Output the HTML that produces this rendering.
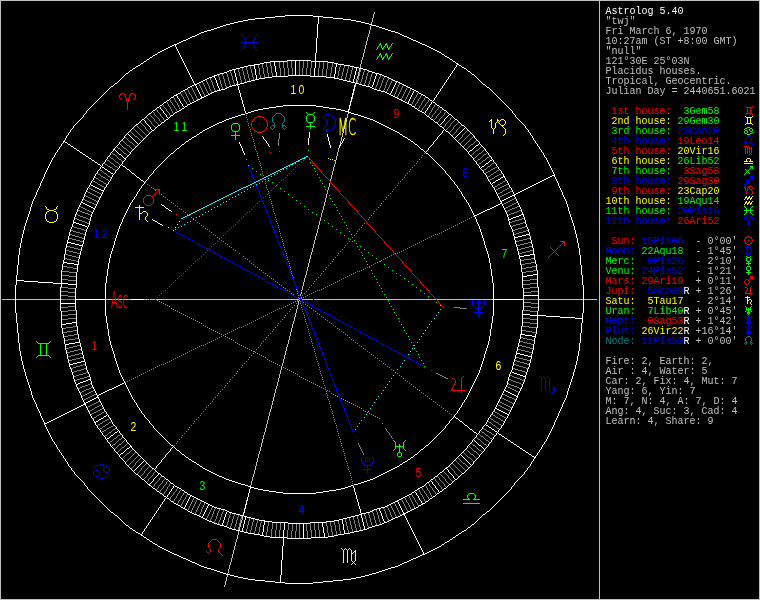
<!DOCTYPE html>
<html lang="en"><head><meta charset="utf-8"><title>Astrolog 5.40</title>
<style>
html,body{margin:0;padding:0;background:#000;}
body{width:760px;height:600px;overflow:hidden;position:relative;}
svg{position:absolute;left:0;top:0;display:block;}
svg text{stroke:none;}

</style></head><body>
<svg width="760" height="600" viewBox="0 0 760 600" shape-rendering="crispEdges" fill="none" stroke-width="1">
<g id="frame">
<path stroke="#c0c0c0" d="M0 0.5 h760M0 599.5 h760M0.5 1 v598M759.5 1 v598"/>
<path stroke="#c0c0c0" d="M599.5 0 v600"/>
</g>
<g id="axes">
<path stroke="#c0c0c0" d="M2 299.5 h595"/>
<path stroke="#c0c0c0" d="M224.5 585 v2M225.5 581 v4M226.5 577 v4M227.5 573 v4M228.5 569 v4M229.5 565 v4M230.5 562 v3M231.5 558 v4M232.5 554 v4M233.5 550 v4M234.5 546 v4M235.5 542 v4M236.5 539 v3M237.5 535 v4M238.5 531 v4M239.5 527 v4M240.5 523 v4M241.5 520 v3M242.5 516 v4M243.5 512 v4M244.5 508 v4M245.5 504 v4M246.5 500 v4M247.5 497 v3M248.5 493 v4M249.5 489 v4M250.5 485 v4M251.5 481 v4M252.5 477 v4M253.5 474 v3M254.5 470 v4M255.5 466 v4M256.5 462 v4M257.5 458 v4M258.5 454 v4M259.5 451 v3M260.5 447 v4M261.5 443 v4M262.5 439 v4M263.5 435 v4M264.5 432 v3M265.5 428 v4M266.5 424 v4M267.5 420 v4M268.5 416 v4M269.5 412 v4M270.5 409 v3M271.5 405 v4M272.5 401 v4M273.5 397 v4M274.5 393 v4M275.5 389 v4M276.5 386 v3M277.5 382 v4M278.5 378 v4M279.5 374 v4M280.5 370 v4M281.5 366 v4M282.5 363 v3M283.5 359 v4M284.5 355 v4M285.5 351 v4M286.5 347 v4M287.5 344 v3M288.5 340 v4M289.5 336 v4M290.5 332 v4M291.5 328 v4M292.5 324 v4M293.5 321 v3M294.5 317 v4M295.5 313 v4M296.5 309 v4M297.5 305 v4M298.5 301 v4M299.5 298 v3M300.5 294 v4M301.5 290 v4M302.5 286 v4M303.5 282 v4M304.5 278 v4M305.5 275 v3M306.5 271 v4M307.5 267 v4M308.5 263 v4M309.5 259 v4M310.5 255 v4M311.5 252 v3M312.5 248 v4M313.5 244 v4M314.5 240 v4M315.5 236 v4M316.5 233 v3M317.5 229 v4M318.5 225 v4M319.5 221 v4M320.5 217 v4M321.5 213 v4M322.5 210 v3M323.5 206 v4M324.5 202 v4M325.5 198 v4M326.5 194 v4M327.5 190 v4M328.5 187 v3M329.5 183 v4M330.5 179 v4M331.5 175 v4M332.5 171 v4M333.5 167 v4M334.5 164 v3M335.5 160 v4M336.5 156 v4M337.5 152 v4M338.5 148 v4M339.5 145 v3M340.5 141 v4M341.5 137 v4M342.5 133 v4M343.5 129 v4M344.5 125 v4M345.5 122 v3M346.5 118 v4M347.5 114 v4M348.5 110 v4M349.5 106 v4M350.5 102 v4M351.5 99 v3M352.5 95 v4M353.5 91 v4M354.5 87 v4M355.5 83 v4M356.5 79 v4M357.5 76 v3M358.5 72 v4M359.5 68 v4M360.5 64 v4M361.5 60 v4M362.5 57 v3M363.5 53 v4M364.5 49 v4M365.5 45 v4M366.5 41 v4M367.5 37 v4M368.5 34 v3M369.5 30 v4M370.5 26 v4M371.5 22 v4M372.5 18 v4M373.5 14 v4M374.5 12 v2"/>
</g>
<g id="degree-ticks">
<path stroke="#808080" d="M135 136.5 h2M130 142.5 h2M471 144.5 h2M127 145.5 h2M118 148.5 h2M124 148.5 h2M476 150.5 h2M124 153.5 h2M479 153.5 h2M113 154.5 h2M484 154.5 h2M487 157.5 h2M111 158.5 h2M119 159.5 h2M478 159.5 h2M107 160.5 h2M483 160.5 h2M116 162.5 h2M111 163.5 h2M479 163.5 h2M492 163.5 h2M105 164.5 h2M108 166.5 h2M115 166.5 h2M488 166.5 h2M110 167.5 h2M495 167.5 h2M493 168.5 h2M113 169.5 h2M484 169.5 h2M491 169.5 h2M100 170.5 h2M497 170.5 h2M488 171.5 h2M486 172.5 h2M494 172.5 h2M104 173.5 h2M98 174.5 h2M491 174.5 h2M499 174.5 h2M497 175.5 h2M101 176.5 h2M108 176.5 h2M488 176.5 h2M495 176.5 h2M103 177.5 h2M96 178.5 h2M492 178.5 h2M106 179.5 h2M490 179.5 h2M99 180.5 h2M93 181.5 h2M101 181.5 h2M503 181.5 h2M95 182.5 h2M104 183.5 h2M500 183.5 h2M98 184.5 h2M498 184.5 h2M506 184.5 h2M100 185.5 h2M504 185.5 h2M102 186.5 h2M495 186.5 h2M502 186.5 h2M500 187.5 h2M89 188.5 h2M498 188.5 h2M507 188.5 h2M91 189.5 h2M496 189.5 h2M505 189.5 h2M93 190.5 h2M503 190.5 h2M95 191.5 h2M510 191.5 h2M88 192.5 h2M97 192.5 h2M500 192.5 h2M508 192.5 h2M90 193.5 h2M99 193.5 h2M498 193.5 h2M506 193.5 h2M92 194.5 h2M504 194.5 h2M94 195.5 h2M502 195.5 h2M86 196.5 h2M96 196.5 h2M500 196.5 h2M88 197.5 h2M98 197.5 h2M90 198.5 h2M514 198.5 h2M83 199.5 h2M92 199.5 h2M512 199.5 h2M85 200.5 h2M94 200.5 h2M510 200.5 h2M87 201.5 h2M96 201.5 h2M508 201.5 h2M89 202.5 h3M506 202.5 h2M516 202.5 h2M92 203.5 h2M504 203.5 h2M514 203.5 h2M94 204.5 h2M512 204.5 h2M510 205.5 h2M79 206.5 h2M508 206.5 h2M517 206.5 h2M81 207.5 h2M506 207.5 h2M515 207.5 h2M83 208.5 h2M504 208.5 h2M512 208.5 h3M85 209.5 h2M510 209.5 h2M78 210.5 h2M87 210.5 h2M508 210.5 h2M519 210.5 h2M80 211.5 h2M89 211.5 h2M506 211.5 h2M517 211.5 h2M82 212.5 h3M91 212.5 h2M514 212.5 h3M85 213.5 h3M511 213.5 h3M76 214.5 h2M88 214.5 h2M509 214.5 h2M78 215.5 h2M90 215.5 h2M507 215.5 h2M80 216.5 h3M83 217.5 h3M75 218.5 h2M86 218.5 h2M522 218.5 h2M77 219.5 h2M88 219.5 h2M519 219.5 h3M79 220.5 h3M515 220.5 h4M82 221.5 h3M512 221.5 h3M85 222.5 h2M510 222.5 h2M523 222.5 h2M87 223.5 h2M520 223.5 h3M516 224.5 h4M513 225.5 h3M72 226.5 h2M511 226.5 h2M525 226.5 h2M74 227.5 h3M522 227.5 h3M77 228.5 h4M518 228.5 h4M81 229.5 h3M515 229.5 h3M71 230.5 h2M84 230.5 h2M513 230.5 h2M526 230.5 h2M73 231.5 h3M523 231.5 h3M76 232.5 h4M519 232.5 h4M80 233.5 h3M516 233.5 h3M70 234.5 h2M83 234.5 h2M514 234.5 h2M72 235.5 h3M75 236.5 h4M79 237.5 h3M69 238.5 h3M82 238.5 h2M527 238.5 h3M72 239.5 h4M523 239.5 h4M76 240.5 h4M519 240.5 h4M80 241.5 h3M516 241.5 h3M528 242.5 h3M524 243.5 h4M520 244.5 h4M517 245.5 h3M67 246.5 h3M529 246.5 h3M70 247.5 h4M525 247.5 h4M74 248.5 h4M521 248.5 h4M78 249.5 h3M518 249.5 h3M66 250.5 h3M530 250.5 h3M69 251.5 h4M526 251.5 h4M73 252.5 h4M522 252.5 h4M77 253.5 h3M519 253.5 h3M65 254.5 h3M68 255.5 h4M72 256.5 h4M76 257.5 h3M64 258.5 h3M531 258.5 h4M67 259.5 h4M524 259.5 h7M71 260.5 h5M520 260.5 h4M76 261.5 h3M531 262.5 h4M525 263.5 h6M521 264.5 h4M63 266.5 h4M532 266.5 h4M67 267.5 h6M526 267.5 h6M73 268.5 h4M522 268.5 h4M533 270.5 h4M62 271.5 h7M526 271.5 h7M69 272.5 h8M522 272.5 h4M62 275.5 h7M69 276.5 h7M61 279.5 h7M530 279.5 h8M68 280.5 h8M523 280.5 h7M530 283.5 h8M523 284.5 h7M61 287.5 h7M530 287.5 h8M68 288.5 h8M523 288.5 h7M61 291.5 h7M531 291.5 h7M68 292.5 h7M524 292.5 h7M61 295.5 h7M68 296.5 h7M61 299.5 h14M524 299.5 h14M524 302.5 h7M531 303.5 h7M68 306.5 h7M524 306.5 h7M61 307.5 h7M531 307.5 h7M68 310.5 h8M523 310.5 h7M61 311.5 h7M530 311.5 h8M68 314.5 h8M61 315.5 h7M68 318.5 h8M523 318.5 h7M61 319.5 h7M530 319.5 h8M523 322.5 h7M530 323.5 h7M73 326.5 h4M522 326.5 h7M66 327.5 h7M529 327.5 h8M62 328.5 h4M73 330.5 h4M522 330.5 h4M67 331.5 h6M526 331.5 h6M63 332.5 h4M532 332.5 h4M74 334.5 h4M68 335.5 h6M64 336.5 h4M520 337.5 h3M75 338.5 h4M523 338.5 h4M68 339.5 h7M527 339.5 h5M64 340.5 h4M532 340.5 h3M520 341.5 h3M523 342.5 h4M527 343.5 h4M531 344.5 h3M77 345.5 h3M519 345.5 h3M73 346.5 h4M522 346.5 h4M69 347.5 h4M526 347.5 h4M66 348.5 h3M530 348.5 h3M78 349.5 h3M518 349.5 h3M74 350.5 h4M521 350.5 h4M70 351.5 h4M525 351.5 h4M67 352.5 h3M529 352.5 h3M79 353.5 h3M75 354.5 h4M71 355.5 h4M68 356.5 h3M80 357.5 h3M516 357.5 h3M76 358.5 h4M519 358.5 h4M72 359.5 h4M523 359.5 h4M69 360.5 h3M515 360.5 h2M527 360.5 h3M517 361.5 h3M520 362.5 h4M524 363.5 h3M83 364.5 h2M514 364.5 h2M527 364.5 h2M80 365.5 h3M516 365.5 h3M76 366.5 h4M519 366.5 h4M73 367.5 h3M523 367.5 h3M71 368.5 h2M84 368.5 h2M513 368.5 h2M526 368.5 h2M81 369.5 h3M515 369.5 h3M77 370.5 h4M518 370.5 h4M74 371.5 h3M522 371.5 h3M72 372.5 h2M86 372.5 h2M525 372.5 h2M83 373.5 h3M79 374.5 h4M76 375.5 h3M510 375.5 h2M74 376.5 h2M87 376.5 h2M512 376.5 h2M84 377.5 h3M514 377.5 h3M80 378.5 h4M517 378.5 h3M77 379.5 h3M509 379.5 h2M520 379.5 h2M75 380.5 h2M511 380.5 h2M522 380.5 h2M513 381.5 h3M516 382.5 h3M90 383.5 h2M507 383.5 h2M519 383.5 h2M88 384.5 h2M509 384.5 h2M521 384.5 h2M85 385.5 h3M511 385.5 h3M82 386.5 h3M506 386.5 h2M514 386.5 h3M80 387.5 h2M91 387.5 h2M508 387.5 h2M517 387.5 h2M78 388.5 h2M89 388.5 h2M510 388.5 h2M519 388.5 h2M86 389.5 h3M512 389.5 h2M84 390.5 h2M93 390.5 h2M514 390.5 h2M82 391.5 h2M91 391.5 h2M516 391.5 h2M80 392.5 h2M89 392.5 h2M518 392.5 h2M87 393.5 h2M85 394.5 h2M94 394.5 h2M503 394.5 h2M83 395.5 h2M92 395.5 h2M505 395.5 h2M81 396.5 h2M90 396.5 h2M507 396.5 h2M88 397.5 h2M509 397.5 h3M86 398.5 h2M502 398.5 h2M512 398.5 h2M84 399.5 h2M504 399.5 h2M514 399.5 h2M506 400.5 h2M98 401.5 h2M508 401.5 h2M96 402.5 h2M500 402.5 h2M510 402.5 h2M94 403.5 h2M502 403.5 h2M512 403.5 h2M92 404.5 h2M504 404.5 h2M90 405.5 h2M99 405.5 h2M498 405.5 h2M506 405.5 h2M88 406.5 h2M97 406.5 h2M500 406.5 h2M508 406.5 h2M95 407.5 h2M502 407.5 h2M510 407.5 h2M102 408.5 h2M504 408.5 h2M92 409.5 h2M100 409.5 h2M506 409.5 h2M90 410.5 h2M98 410.5 h2M508 410.5 h2M96 411.5 h2M94 412.5 h2M102 412.5 h2M495 412.5 h2M92 413.5 h2M497 413.5 h2M99 414.5 h2M97 415.5 h2M493 415.5 h2M500 415.5 h2M502 416.5 h2M94 417.5 h2M496 417.5 h2M504 417.5 h2M498 418.5 h2M107 419.5 h2M491 419.5 h2M105 420.5 h2M501 420.5 h2M103 421.5 h2M494 421.5 h2M109 422.5 h2M489 422.5 h2M496 422.5 h2M100 423.5 h2M98 424.5 h2M106 424.5 h2M499 424.5 h2M493 425.5 h2M103 426.5 h2M111 426.5 h2M109 427.5 h2M100 428.5 h2M107 428.5 h2M497 428.5 h2M113 429.5 h2M484 429.5 h2M104 430.5 h2M102 431.5 h2M487 431.5 h2M109 432.5 h2M482 432.5 h2M489 432.5 h2M492 434.5 h2M105 435.5 h2M118 435.5 h2M486 435.5 h2M481 436.5 h2M114 438.5 h2M490 438.5 h2M119 439.5 h2M478 439.5 h2M486 440.5 h2M110 441.5 h2M113 444.5 h2M119 444.5 h2M484 444.5 h2M473 445.5 h2M122 447.5 h2M479 450.5 h2M474 451.5 h2M127 453.5 h2M471 454.5 h2M468 457.5 h2M463 463.5 h2M83 400.5 h1M85 195.5 h1M87 191.5 h1M87 407.5 h1M88 187.5 h1M89 411.5 h1M91 414.5 h1M92 180.5 h1M93 418.5 h1M94 408.5 h1M95 177.5 h1M96 416.5 h1M97 173.5 h1M97 183.5 h1M97 425.5 h1M98 179.5 h1M99 169.5 h1M99 429.5 h1M100 175.5 h1M101 194.5 h1M101 404.5 h1M101 413.5 h1M101 432.5 h1M102 171.5 h1M102 422.5 h1M102 427.5 h1M103 172.5 h1M103 182.5 h1M104 163.5 h1M104 187.5 h1M104 411.5 h1M104 436.5 h1M105 178.5 h1M105 425.5 h1M106 159.5 h1M106 174.5 h1M106 184.5 h1M106 429.5 h1M107 165.5 h1M107 175.5 h1M107 434.5 h1M108 180.5 h1M108 423.5 h1M108 433.5 h1M109 156.5 h1M109 161.5 h1M109 418.5 h1M109 442.5 h1M110 157.5 h1M110 162.5 h1M110 177.5 h1M111 152.5 h1M111 421.5 h1M111 431.5 h1M111 446.5 h1M112 153.5 h1M112 168.5 h1M112 430.5 h1M112 440.5 h1M112 445.5 h1M113 159.5 h1M113 164.5 h1M113 425.5 h1M113 439.5 h1M114 160.5 h1M114 165.5 h1M114 449.5 h1M115 155.5 h1M115 161.5 h1M115 170.5 h1M115 428.5 h1M115 443.5 h1M115 448.5 h1M116 146.5 h1M116 156.5 h1M116 437.5 h1M116 442.5 h1M116 447.5 h1M117 147.5 h1M117 157.5 h1M117 167.5 h1M117 436.5 h1M117 441.5 h1M117 446.5 h1M117 452.5 h1M118 158.5 h1M118 163.5 h1M118 440.5 h1M118 445.5 h1M118 451.5 h1M119 143.5 h1M119 164.5 h1M119 450.5 h1M120 144.5 h1M120 149.5 h1M120 434.5 h1M120 449.5 h1M121 145.5 h1M121 150.5 h1M121 160.5 h1M121 438.5 h1M121 443.5 h1M121 448.5 h1M122 140.5 h1M122 146.5 h1M122 151.5 h1M122 161.5 h1M122 437.5 h1M122 442.5 h1M122 458.5 h1M123 141.5 h1M123 147.5 h1M123 152.5 h1M123 441.5 h1M123 457.5 h1M124 142.5 h1M124 440.5 h1M124 446.5 h1M124 456.5 h1M125 137.5 h1M125 143.5 h1M125 445.5 h1M125 455.5 h1M125 462.5 h1M126 138.5 h1M126 144.5 h1M126 149.5 h1M126 154.5 h1M126 444.5 h1M126 454.5 h1M126 461.5 h1M127 139.5 h1M127 150.5 h1M127 155.5 h1M127 443.5 h1M127 460.5 h1M128 140.5 h1M128 151.5 h1M128 459.5 h1M128 465.5 h1M129 141.5 h1M129 146.5 h1M129 152.5 h1M129 452.5 h1M129 458.5 h1M129 464.5 h1M130 131.5 h1M130 147.5 h1M130 451.5 h1M130 457.5 h1M130 463.5 h1M131 132.5 h1M131 148.5 h1M131 450.5 h1M131 456.5 h1M131 462.5 h1M131 468.5 h1M132 133.5 h1M132 143.5 h1M132 149.5 h1M132 449.5 h1M132 455.5 h1M132 461.5 h1M132 467.5 h1M133 128.5 h1M133 134.5 h1M133 144.5 h1M133 454.5 h1M133 460.5 h1M133 466.5 h1M134 129.5 h1M134 135.5 h1M134 145.5 h1M134 453.5 h1M134 459.5 h1M134 465.5 h1M135 130.5 h1M135 146.5 h1M135 452.5 h1M135 458.5 h1M135.5 463 v2M136 125.5 h1M136 131.5 h1M136 457.5 h1M136 462.5 h1M137 126.5 h1M137 132.5 h1M137 137.5 h1M137 456.5 h1M137 461.5 h1M137 473.5 h1M138 127.5 h1M138 133.5 h1M138 138.5 h1M138 455.5 h1M138 460.5 h1M138 472.5 h1M139 128.5 h1M139 134.5 h1M139 139.5 h1M139 459.5 h1M139 471.5 h1M140 122.5 h1M140 129.5 h1M140 135.5 h1M140 140.5 h1M140 458.5 h1M140 470.5 h1M140 476.5 h1M141 123.5 h1M141 130.5 h1M141 136.5 h1M141.5 468 v2M141 475.5 h1M142 124.5 h1M142 131.5 h1M142 137.5 h1M142 467.5 h1M142 474.5 h1M143 125.5 h1M143 132.5 h1M143 138.5 h1M143 466.5 h1M143 473.5 h1M143 479.5 h1M144 126.5 h1M144 133.5 h1M144 465.5 h1M144.5 471 v2M144 478.5 h1M145.5 127 v2M145 134.5 h1M145 464.5 h1M145 470.5 h1M145 477.5 h1M146 117.5 h1M146 129.5 h1M146 135.5 h1M146 463.5 h1M146 469.5 h1M146 476.5 h1M146 482.5 h1M147 118.5 h1M147 130.5 h1M147 468.5 h1M147.5 474 v2M147 481.5 h1M148 119.5 h1M148 131.5 h1M148 467.5 h1M148 473.5 h1M148.5 479 v2M149 114.5 h1M149 120.5 h1M149 132.5 h1M149 466.5 h1M149 472.5 h1M149 478.5 h1M150 115.5 h1M150 121.5 h1M150 471.5 h1M150 477.5 h1M151 116.5 h1M151.5 122 v2M151 470.5 h1M151 476.5 h1M152 111.5 h1M152 117.5 h1M152 124.5 h1M152 469.5 h1M152 475.5 h1M152 487.5 h1M153 112.5 h1M153 118.5 h1M153 125.5 h1M153.5 473 v2M153 486.5 h1M154.5 113 v2M154.5 119 v2M154 126.5 h1M154 472.5 h1M154.5 484 v2M155 115.5 h1M155 121.5 h1M155 127.5 h1M155 471.5 h1M155 483.5 h1M156 109.5 h1M156 116.5 h1M156 122.5 h1M156 482.5 h1M156 489.5 h1M157.5 110 v2M157 117.5 h1M157 123.5 h1M157 481.5 h1M157 488.5 h1M158 112.5 h1M158 118.5 h1M158 124.5 h1M158 480.5 h1M158.5 486 v2M159 113.5 h1M159.5 119 v2M159.5 478 v2M159 485.5 h1M159 492.5 h1M160.5 114 v2M160 121.5 h1M160 477.5 h1M160 484.5 h1M160.5 490 v2M161 116.5 h1M161 122.5 h1M161 476.5 h1M161 483.5 h1M161 489.5 h1M162 104.5 h1M162 117.5 h1M162.5 481 v2M162 488.5 h1M163.5 105 v2M163.5 118 v2M163 480.5 h1M163.5 486 v2M163 494.5 h1M164 107.5 h1M164 120.5 h1M164 479.5 h1M164 485.5 h1M164.5 492 v2M165 108.5 h1M165 484.5 h1M165 491.5 h1M166 101.5 h1M166.5 109 v2M166.5 482 v2M166.5 489 v2M167.5 102 v2M167 111.5 h1M167 481.5 h1M167.5 487 v2M168.5 104 v2M168 112.5 h1M168 486.5 h1M169 99.5 h1M169 106.5 h1M169.5 113 v2M169.5 484 v2M169 499.5 h1M170.5 100 v2M170.5 107 v2M170 115.5 h1M170 483.5 h1M170.5 497 v2M171 102.5 h1M171.5 109 v2M171 496.5 h1M172.5 103 v2M172.5 111 v2M172 495.5 h1M173 97.5 h1M173 105.5 h1M173 113.5 h1M173.5 493 v2M173 501.5 h1M174.5 98 v2M174.5 106 v2M174 492.5 h1M174.5 499 v2M175.5 100 v2M175 108.5 h1M175 491.5 h1M175 498.5 h1M176 102.5 h1M176.5 109 v2M176.5 489 v2M176.5 496 v2M177.5 103 v2M177 111.5 h1M177 488.5 h1M177.5 494 v2M177 503.5 h1M178.5 105 v2M178 493.5 h1M178.5 501 v2M179.5 107 v2M179.5 491 v2M179 500.5 h1M180 93.5 h1M180 109.5 h1M180 490.5 h1M180.5 498 v2M180 506.5 h1M181.5 94 v2M181.5 496 v2M181.5 504 v2M182 96.5 h1M182 495.5 h1M182.5 502 v2M183.5 97 v2M183.5 493 v2M183.5 500 v2M184 91.5 h1M184.5 99 v2M184 492.5 h1M184 499.5 h1M185.5 92 v2M185 101.5 h1M185.5 497 v2M186.5 94 v2M186.5 102 v2M186.5 495 v2M187 89.5 h1M187.5 96 v2M187 104.5 h1M187 494.5 h1M187 510.5 h1M188.5 90 v2M188.5 98 v2M188.5 508 v2M189.5 92 v2M189.5 100 v2M189.5 506 v2M190 94.5 h1M190.5 102 v2M190.5 504 v2M191 87.5 h1M191.5 95 v2M191.5 502 v2M191.5 510 v2M192.5 88 v2M192.5 97 v2M192.5 500 v2M192.5 508 v2M193.5 90 v2M193.5 99 v2M193.5 498 v2M193.5 506 v2M194.5 92 v2M194 101.5 h1M194 497.5 h1M194.5 504 v2M195.5 94 v2M195.5 502 v2M195.5 512 v2M196.5 96 v2M196.5 500 v2M196.5 510 v2M197.5 98 v2M197 499.5 h1M197.5 508 v2M198 83.5 h1M198.5 506 v2M199.5 84 v2M199.5 504 v2M199.5 514 v2M200.5 86 v2M200.5 502 v2M200.5 512 v2M201.5 88 v2M201 501.5 h1M201.5 509 v3M202.5 81 v2M202.5 90 v2M202.5 507 v2M203.5 83 v2M203.5 92 v2M203.5 505 v2M204.5 85 v2M204.5 94 v2M204.5 503 v2M205.5 87 v2M206.5 80 v2M206.5 89 v2M206.5 518 v2M207.5 82 v2M207.5 91 v2M207.5 516 v2M208.5 84 v2M208.5 93 v2M208.5 514 v2M209.5 86 v3M209.5 512 v2M210.5 78 v2M210.5 89 v2M210.5 510 v2M210.5 519 v2M211.5 80 v2M211.5 91 v2M211.5 508 v2M211.5 517 v2M212.5 82 v3M212.5 506 v2M212.5 514 v3M213.5 85 v3M213.5 511 v3M214.5 88 v2M214.5 509 v2M214.5 521 v2M215.5 90 v2M215.5 507 v2M215.5 519 v2M216.5 516 v3M217.5 513 v3M218.5 75 v2M218.5 511 v2M218.5 522 v2M219.5 77 v3M219.5 509 v2M219.5 520 v2M220.5 80 v4M220.5 517 v3M221.5 84 v3M221.5 514 v3M222.5 74 v2M222.5 87 v2M222.5 512 v2M223.5 76 v3M223.5 510 v2M224.5 79 v4M225.5 83 v3M226.5 72 v2M226.5 86 v2M226.5 525 v2M227.5 74 v3M227.5 522 v3M228.5 77 v4M228.5 518 v4M229.5 81 v3M229.5 515 v3M230.5 71 v2M230.5 84 v2M230.5 513 v2M230.5 526 v2M231.5 73 v3M231.5 523 v3M232.5 76 v4M232.5 519 v4M233.5 80 v3M233.5 516 v3M234.5 83 v2M234.5 514 v2M234.5 527 v2M235.5 524 v3M236.5 520 v4M237.5 517 v3M238.5 69 v3M238.5 515 v2M238.5 527 v3M239.5 72 v4M239.5 523 v4M240.5 76 v4M240.5 519 v4M241.5 80 v3M241.5 516 v3M242.5 68 v3M243.5 71 v4M244.5 75 v4M245.5 79 v3M246.5 67 v3M246.5 529 v3M247.5 70 v4M247.5 525 v4M248.5 74 v4M248.5 521 v4M249.5 78 v3M249.5 518 v3M250.5 66 v3M250.5 530 v3M251.5 69 v4M251.5 526 v4M252.5 73 v4M252.5 522 v4M253.5 77 v3M253.5 519 v3M254.5 531 v3M255.5 527 v4M256.5 523 v4M257.5 520 v3M258.5 64 v4M258.5 532 v3M259.5 68 v7M259.5 527 v5M260.5 75 v4M260.5 523 v4M261.5 520 v3M262.5 64 v4M263.5 68 v6M264.5 74 v4M266.5 63 v4M266.5 532 v4M267.5 67 v6M267.5 526 v6M268.5 73 v4M268.5 522 v4M270.5 62 v4M271.5 66 v7M271.5 529 v8M272.5 73 v4M272.5 522 v7M275.5 530 v7M276.5 523 v7M279.5 61 v7M279.5 530 v8M280.5 68 v8M280.5 523 v7M283.5 61 v7M284.5 68 v8M287.5 61 v7M287.5 530 v8M288.5 68 v8M288.5 523 v7M291.5 61 v7M291.5 531 v7M292.5 68 v7M292.5 524 v7M295.5 531 v7M296.5 524 v7M299.5 61 v14M299.5 524 v14M302.5 68 v7M303.5 61 v7M306.5 68 v7M306.5 524 v7M307.5 61 v7M307.5 531 v7M310.5 68 v8M310.5 523 v7M311.5 61 v7M311.5 530 v8M314.5 523 v7M315.5 530 v8M318.5 68 v8M318.5 523 v7M319.5 61 v7M319.5 530 v8M322.5 69 v7M323.5 62 v7M326.5 69 v8M326.5 522 v4M327.5 62 v7M327.5 526 v7M328.5 533 v4M330.5 73 v4M330.5 522 v4M331.5 67 v6M331.5 526 v6M332.5 63 v4M332.5 532 v4M334.5 521 v4M335.5 525 v6M336.5 531 v4M337.5 76 v3M338.5 71 v5M338.5 520 v4M339.5 67 v4M339.5 524 v7M340.5 64 v3M340.5 531 v4M341.5 76 v3M342.5 72 v4M343.5 68 v4M344.5 65 v3M345.5 77 v3M345.5 519 v3M346.5 73 v4M346.5 522 v4M347.5 69 v4M347.5 526 v4M348.5 66 v3M348.5 530 v3M349.5 78 v3M349.5 518 v3M350.5 74 v4M350.5 521 v4M351.5 70 v4M351.5 525 v4M352.5 67 v3M352.5 529 v3M353.5 517 v3M354.5 520 v4M355.5 524 v4M356.5 528 v3M357.5 80 v3M357.5 516 v3M358.5 76 v4M358.5 519 v4M359.5 72 v4M359.5 523 v4M360.5 69 v3M360.5 82 v2M360.5 527 v3M361.5 79 v3M362.5 75 v4M363.5 72 v3M364.5 70 v2M364.5 83 v2M364.5 514 v2M365.5 80 v3M365.5 516 v3M366.5 76 v4M366.5 519 v4M367.5 73 v3M367.5 523 v3M368.5 71 v2M368.5 84 v2M368.5 513 v2M368.5 526 v2M369.5 81 v3M369.5 515 v3M370.5 77 v4M370.5 518 v4M371.5 74 v3M371.5 522 v3M372.5 72 v2M372.5 511 v2M372.5 525 v2M373.5 513 v3M374.5 516 v4M375.5 87 v2M375.5 520 v3M376.5 85 v2M376.5 510 v2M376.5 523 v2M377.5 82 v3M377.5 512 v3M378.5 79 v3M378.5 515 v4M379.5 77 v2M379.5 88 v2M379.5 519 v3M380.5 75 v2M380.5 86 v2M380.5 522 v2M381.5 83 v3M382.5 80 v3M383.5 78 v2M383.5 90 v2M383.5 507 v2M384.5 76 v2M384.5 88 v2M384.5 509 v2M385.5 85 v3M385.5 511 v3M386.5 82 v3M386.5 91 v2M386.5 514 v3M387.5 80 v2M387.5 89 v2M387.5 506 v2M387.5 517 v2M388.5 78 v2M388.5 87 v2M388.5 508 v2M388.5 519 v2M389.5 85 v2M389.5 510 v2M390.5 83 v2M390.5 504 v2M390.5 512 v3M391.5 81 v2M391.5 506 v2M391.5 515 v2M392.5 79 v2M392.5 508 v2M392.5 517 v2M393.5 510 v2M394.5 94 v2M394 503.5 h1M394.5 512 v2M395.5 92 v2M395.5 504 v2M395.5 514 v2M396.5 89 v3M396.5 506 v2M396.5 516 v2M397.5 87 v2M397.5 96 v2M397.5 508 v2M398.5 85 v2M398.5 94 v2M398.5 510 v2M399.5 83 v2M399.5 92 v2M399.5 512 v2M400.5 90 v2M400.5 514 v2M401.5 88 v2M401.5 98 v2M401 499.5 h1M402.5 86 v2M402.5 96 v2M402.5 500 v2M403 85.5 h1M403.5 94 v2M403.5 502 v2M404.5 92 v2M404 101.5 h1M404 497.5 h1M404.5 504 v2M405.5 90 v2M405.5 99 v2M405.5 498 v2M405.5 506 v2M406.5 88 v2M406.5 97 v2M406.5 500 v2M406.5 508 v2M407 87.5 h1M407.5 95 v2M407 502.5 h1M407.5 510 v2M408.5 93 v2M408 495.5 h1M408.5 503 v2M409.5 91 v2M409.5 496 v2M409.5 505 v2M410.5 89 v2M410.5 498 v2M410.5 507 v2M411 88.5 h1M411 104.5 h1M411 494.5 h1M411.5 500 v2M411 509.5 h1M412.5 102 v2M412.5 495 v2M412.5 502 v2M413.5 100 v2M413 497.5 h1M413.5 504 v2M414.5 98 v2M414 106.5 h1M414.5 498 v2M414.5 506 v2M415 97.5 h1M415.5 104 v2M415.5 500 v2M416.5 95 v2M416 103.5 h1M416 502.5 h1M417.5 93 v2M417.5 101 v2M417.5 503 v2M418 92.5 h1M418.5 99 v2M418 108.5 h1M418 489.5 h1M418 505.5 h1M419 98.5 h1M419.5 106 v2M419.5 490 v2M420.5 96 v2M420 105.5 h1M420.5 492 v2M421 95.5 h1M421.5 103 v2M421 110.5 h1M421 487.5 h1M421 494.5 h1M422.5 101 v2M422.5 108 v2M422.5 488 v2M422.5 495 v2M423 100.5 h1M423 107.5 h1M423 490.5 h1M423.5 497 v2M424.5 98 v2M424 106.5 h1M424.5 491 v2M424.5 499 v2M425 97.5 h1M425.5 104 v2M425 485.5 h1M425 493.5 h1M425 501.5 h1M426 103.5 h1M426.5 486 v2M426.5 494 v2M427 102.5 h1M427.5 488 v2M427 496.5 h1M428.5 100 v2M428 115.5 h1M428 483.5 h1M428 490.5 h1M428.5 497 v2M429 99.5 h1M429.5 113 v2M429.5 484 v2M429.5 491 v2M429 499.5 h1M430 112.5 h1M430 486.5 h1M430.5 493 v2M431.5 110 v2M431 117.5 h1M431 487.5 h1M431.5 495 v2M432.5 108 v2M432.5 115 v2M432.5 488 v2M432 497.5 h1M433 107.5 h1M433 114.5 h1M433 490.5 h1M434.5 105 v2M434 113.5 h1M434 119.5 h1M434 478.5 h1M434 491.5 h1M435 104.5 h1M435.5 111 v2M435 118.5 h1M435.5 479 v2M435.5 492 v2M436 110.5 h1M436.5 116 v2M436 481.5 h1M436 494.5 h1M437 109.5 h1M437 115.5 h1M437 122.5 h1M437 476.5 h1M437 482.5 h1M438.5 107 v2M438 114.5 h1M438 121.5 h1M438 477.5 h1M438.5 483 v2M439 106.5 h1M439 113.5 h1M439.5 119 v2M439.5 478 v2M439 485.5 h1M440.5 111 v2M440 118.5 h1M440 474.5 h1M440 480.5 h1M440 486.5 h1M441 110.5 h1M441 117.5 h1M441 475.5 h1M441 481.5 h1M441.5 487 v2M442 109.5 h1M442 116.5 h1M442 476.5 h1M442 482.5 h1M442 489.5 h1M443 115.5 h1M443 127.5 h1M443 471.5 h1M443 477.5 h1M443 483.5 h1M444.5 113 v2M444 126.5 h1M444 472.5 h1M444 478.5 h1M444.5 484 v2M445 112.5 h1M445.5 124 v2M445 473.5 h1M445.5 479 v2M445 486.5 h1M446 111.5 h1M446 123.5 h1M446 129.5 h1M446 474.5 h1M446 481.5 h1M446 487.5 h1M447 122.5 h1M447 128.5 h1M447 475.5 h1M447 482.5 h1M448 121.5 h1M448 127.5 h1M448.5 476 v2M448 483.5 h1M449 120.5 h1M449 126.5 h1M449 132.5 h1M449 466.5 h1M449 478.5 h1M449 484.5 h1M450.5 118 v2M450.5 124 v2M450 131.5 h1M450 467.5 h1M450 479.5 h1M451 117.5 h1M451 123.5 h1M451 130.5 h1M451 468.5 h1M451 480.5 h1M452 116.5 h1M452 122.5 h1M452 129.5 h1M452 135.5 h1M452 463.5 h1M452 469.5 h1M452 481.5 h1M453 121.5 h1M453.5 127 v2M453 134.5 h1M453 464.5 h1M453 470.5 h1M454 120.5 h1M454 126.5 h1M454 133.5 h1M454 465.5 h1M454.5 471 v2M455 119.5 h1M455 125.5 h1M455 132.5 h1M455 460.5 h1M455 466.5 h1M455 473.5 h1M456 124.5 h1M456.5 130 v2M456 461.5 h1M456 467.5 h1M456 474.5 h1M457 123.5 h1M457 129.5 h1M457 462.5 h1M457 468.5 h1M457 475.5 h1M458 122.5 h1M458 128.5 h1M458 140.5 h1M458 458.5 h1M458 463.5 h1M458 469.5 h1M458 476.5 h1M459 127.5 h1M459 139.5 h1M459 459.5 h1M459 464.5 h1M459 470.5 h1M460 126.5 h1M460 138.5 h1M460 143.5 h1M460 460.5 h1M460 465.5 h1M460 471.5 h1M461 125.5 h1M461 137.5 h1M461 142.5 h1M461 461.5 h1M461 466.5 h1M461 472.5 h1M462.5 135 v2M462 141.5 h1M462 462.5 h1M462 467.5 h1M462 473.5 h1M463 134.5 h1M463 140.5 h1M463 146.5 h1M463 452.5 h1M463 468.5 h1M464 133.5 h1M464 139.5 h1M464 145.5 h1M464 453.5 h1M464 469.5 h1M465 132.5 h1M465 138.5 h1M465 144.5 h1M465 454.5 h1M465 464.5 h1M465 470.5 h1M466 131.5 h1M466 137.5 h1M466 143.5 h1M466 149.5 h1M466 449.5 h1M466 455.5 h1M466 465.5 h1M467 130.5 h1M467 136.5 h1M467 142.5 h1M467 148.5 h1M467 450.5 h1M467 456.5 h1M467 466.5 h1M468 135.5 h1M468 141.5 h1M468 147.5 h1M468 451.5 h1M468 467.5 h1M469 134.5 h1M469 140.5 h1M469 146.5 h1M469 446.5 h1M469 452.5 h1M470 133.5 h1M470 139.5 h1M470 145.5 h1M470 447.5 h1M470 453.5 h1M470 458.5 h1M471 138.5 h1M471 155.5 h1M471 443.5 h1M471 448.5 h1M471 459.5 h1M472 137.5 h1M472 154.5 h1M472 444.5 h1M472 449.5 h1M472 460.5 h1M473 136.5 h1M473 143.5 h1M473 153.5 h1M473 450.5 h1M473 455.5 h1M473 461.5 h1M474 142.5 h1M474 152.5 h1M474 158.5 h1M474 456.5 h1M475 141.5 h1M475 151.5 h1M475 157.5 h1M475 446.5 h1M475 457.5 h1M476 140.5 h1M476 156.5 h1M476 161.5 h1M476 437.5 h1M476 447.5 h1M476 452.5 h1M476 458.5 h1M477 155.5 h1M477 160.5 h1M477 438.5 h1M477 448.5 h1M477 453.5 h1M478 149.5 h1M478 154.5 h1M478 164.5 h1M478 449.5 h1M478 454.5 h1M479 148.5 h1M479 434.5 h1M479 455.5 h1M480 147.5 h1M480 158.5 h1M480 435.5 h1M480 440.5 h1M481 146.5 h1M481 152.5 h1M481 157.5 h1M481 162.5 h1M481 431.5 h1M481 441.5 h1M481 451.5 h1M482 151.5 h1M482 156.5 h1M482 161.5 h1M482 442.5 h1M482 452.5 h1M483 150.5 h1M483 155.5 h1M483 170.5 h1M483 428.5 h1M483 437.5 h1M483 443.5 h1M484 149.5 h1M484 433.5 h1M484 438.5 h1M485 159.5 h1M485 173.5 h1M485 434.5 h1M485 439.5 h1M486 153.5 h1M486 158.5 h1M486 168.5 h1M486 430.5 h1M486 445.5 h1M487 152.5 h1M487 167.5 h1M487 177.5 h1M487 446.5 h1M488 421.5 h1M488 436.5 h1M488 441.5 h1M489 156.5 h1M489 180.5 h1M489 437.5 h1M489 442.5 h1M490 165.5 h1M490 170.5 h1M490 175.5 h1M490 418.5 h1M491 164.5 h1M491 423.5 h1M491 433.5 h1M492 414.5 h1M492 424.5 h1M492 439.5 h1M493 173.5 h1M493 420.5 h1M494 162.5 h1M494 177.5 h1M494 187.5 h1M494 411.5 h1M494 435.5 h1M495 190.5 h1M495 416.5 h1M495 426.5 h1M496 171.5 h1M496 427.5 h1M497 166.5 h1M497 185.5 h1M497 194.5 h1M497 404.5 h1M498 423.5 h1M499 169.5 h1M499 197.5 h1M499 401.5 h1M499 414.5 h1M499 429.5 h1M500 419.5 h1M501 173.5 h1M501 397.5 h1M501 425.5 h1M502 182.5 h1M502 191.5 h1M503 204.5 h1M503 421.5 h1M505 180.5 h1M506 418.5 h1M509 187.5 h1M510 411.5 h1"/>
<path stroke="#fff" d="M476 145.5 h2M470 150.5 h2M119 154.5 h2M490 160.5 h2M486 163.5 h2M482 166.5 h2M102 167.5 h2M105 169.5 h2M108 171.5 h2M111 173.5 h2M501 177.5 h2M498 179.5 h2M496 180.5 h2M493 182.5 h2M91 185.5 h2M93 186.5 h2M95 187.5 h2M97 188.5 h2M99 189.5 h2M101 190.5 h2M512 195.5 h2M510 196.5 h2M508 197.5 h2M506 198.5 h2M504 199.5 h2M502 200.5 h2M81 202.5 h2M83 203.5 h2M85 204.5 h2M87 205.5 h2M89 206.5 h2M91 207.5 h2M93 208.5 h2M521 214.5 h2M519 215.5 h2M516 216.5 h3M513 217.5 h3M511 218.5 h2M509 219.5 h2M74 222.5 h2M76 223.5 h3M79 224.5 h3M82 225.5 h3M85 226.5 h2M526 234.5 h3M522 235.5 h4M518 236.5 h4M515 237.5 h3M68 242.5 h3M71 243.5 h4M75 244.5 h4M79 245.5 h3M530 254.5 h4M524 255.5 h6M520 256.5 h4M63 262.5 h4M67 263.5 h7M74 264.5 h4M533 274.5 h4M527 275.5 h6M523 276.5 h4M61 283.5 h7M68 284.5 h8M524 295.5 h14M61 303.5 h14M523 314.5 h7M530 315.5 h8M72 322.5 h4M66 323.5 h6M62 324.5 h4M521 334.5 h4M525 335.5 h7M532 336.5 h4M75 342.5 h4M69 343.5 h6M65 344.5 h4M517 353.5 h3M520 354.5 h4M524 355.5 h4M528 356.5 h3M81 361.5 h3M77 362.5 h4M73 363.5 h4M70 364.5 h3M512 372.5 h2M514 373.5 h3M517 374.5 h3M520 375.5 h3M523 376.5 h2M88 379.5 h2M86 380.5 h2M83 381.5 h3M80 382.5 h3M78 383.5 h2M76 384.5 h2M504 390.5 h2M506 391.5 h2M508 392.5 h2M510 393.5 h2M512 394.5 h2M514 395.5 h2M516 396.5 h2M96 397.5 h2M94 398.5 h2M92 399.5 h2M90 400.5 h2M88 401.5 h2M86 402.5 h2M497 409.5 h2M499 410.5 h2M501 411.5 h2M503 412.5 h2M505 413.5 h2M507 414.5 h2M104 416.5 h2M101 418.5 h2M99 419.5 h2M96 421.5 h2M486 425.5 h2M489 427.5 h2M492 429.5 h2M495 431.5 h2M115 432.5 h2M111 435.5 h2M107 438.5 h2M479 445.5 h2M127 448.5 h2M121 453.5 h2M85 403.5 h1M90 184.5 h1M95 422.5 h1M98 420.5 h1M101 166.5 h1M103 417.5 h1M104 168.5 h1M106 415.5 h1M106 439.5 h1M107 170.5 h1M109 437.5 h1M110 172.5 h1M110 436.5 h1M113 174.5 h1M113 434.5 h1M114 149.5 h1M114 433.5 h1M115 150.5 h1M116 151.5 h1M117 152.5 h1M117 431.5 h1M118 153.5 h1M119 455.5 h1M120 454.5 h1M121 155.5 h1M122 156.5 h1M123 157.5 h1M123 452.5 h1M124 158.5 h1M124 451.5 h1M125 450.5 h1M126 449.5 h1M128 134.5 h1M129 135.5 h1M129 447.5 h1M130 136.5 h1M130 446.5 h1M131 137.5 h1M132 138.5 h1M133 139.5 h1M134 140.5 h1M134 470.5 h1M135 141.5 h1M135 469.5 h1M136 142.5 h1M136 468.5 h1M137 143.5 h1M137 467.5 h1M138 466.5 h1M139 465.5 h1M140 464.5 h1M141 463.5 h1M142 462.5 h1M143 119.5 h1M143 461.5 h1M144 120.5 h1M145.5 121 v2M146 123.5 h1M147 124.5 h1M148 125.5 h1M149 126.5 h1M149 484.5 h1M150.5 127 v2M150 483.5 h1M151 129.5 h1M151 482.5 h1M152 130.5 h1M152 481.5 h1M153.5 479 v2M154 478.5 h1M155 477.5 h1M156 476.5 h1M157 475.5 h1M158 474.5 h1M159 106.5 h1M160.5 107 v2M161 109.5 h1M162 110.5 h1M163.5 111 v2M164 113.5 h1M165 114.5 h1M166.5 115 v2M166 497.5 h1M167 117.5 h1M167.5 495 v2M168 494.5 h1M169.5 492 v2M170 491.5 h1M171.5 489 v2M172 488.5 h1M173.5 486 v2M174 485.5 h1M176 95.5 h1M177.5 96 v2M178 98.5 h1M179.5 99 v2M180.5 101 v2M181 103.5 h1M182.5 104 v2M183 106.5 h1M184.5 507 v2M185.5 505 v2M186.5 503 v2M187.5 501 v2M188.5 499 v2M189.5 497 v2M190 496.5 h1M195 85.5 h1M196.5 86 v2M197.5 88 v2M198.5 90 v2M199.5 92 v2M200.5 94 v2M201.5 96 v2M202.5 516 v2M203.5 514 v2M204.5 512 v2M205.5 510 v2M206.5 508 v2M207.5 506 v2M208.5 504 v2M214.5 76 v2M215.5 78 v2M216.5 80 v3M217.5 83 v3M218.5 86 v2M219.5 88 v2M222.5 523 v2M223.5 520 v3M224.5 517 v3M225.5 514 v3M226.5 512 v2M234.5 70 v3M235.5 73 v4M236.5 77 v4M237.5 81 v3M242.5 528 v3M243.5 524 v4M244.5 520 v4M245.5 517 v3M254.5 65 v4M255.5 69 v6M256.5 75 v4M262.5 532 v4M263.5 525 v7M264.5 521 v4M274.5 62 v4M275.5 66 v6M276.5 72 v4M283.5 530 v8M284.5 523 v7M295.5 61 v14M303.5 524 v14M314.5 68 v8M315.5 61 v7M322.5 523 v4M323.5 527 v6M324.5 533 v4M334.5 74 v4M335.5 67 v7M336.5 63 v4M342.5 520 v4M343.5 524 v6M344.5 530 v4M353.5 79 v3M354.5 75 v4M355.5 71 v4M356.5 68 v3M361.5 515 v3M362.5 518 v4M363.5 522 v4M364.5 526 v3M372.5 85 v2M373.5 82 v3M374.5 79 v3M375.5 76 v3M376.5 74 v2M379.5 509 v2M380.5 511 v2M381.5 513 v3M382.5 516 v3M383.5 519 v2M384.5 521 v2M390.5 93 v2M391.5 91 v2M392.5 89 v2M393.5 87 v2M394.5 85 v2M395.5 83 v2M396.5 81 v2M397 501.5 h1M398.5 502 v2M399.5 504 v2M400.5 506 v2M401.5 508 v2M402.5 510 v2M403.5 512 v2M408.5 101 v2M409.5 99 v2M410.5 97 v2M411.5 95 v2M412.5 93 v2M413.5 91 v2M414 90.5 h1M415 492.5 h1M416.5 493 v2M417 495.5 h1M418.5 496 v2M419.5 498 v2M420 500.5 h1M421.5 501 v2M422 503.5 h1M424 113.5 h1M425.5 111 v2M426 110.5 h1M427.5 108 v2M428 107.5 h1M429.5 105 v2M430 104.5 h1M431.5 102 v2M431 481.5 h1M432 101.5 h1M432.5 482 v2M433 484.5 h1M434 485.5 h1M435.5 486 v2M436 488.5 h1M437 489.5 h1M438.5 490 v2M439 492.5 h1M440 124.5 h1M441 123.5 h1M442 122.5 h1M443 121.5 h1M444.5 119 v2M445 118.5 h1M446 117.5 h1M446 468.5 h1M447 116.5 h1M447 469.5 h1M448 115.5 h1M448.5 470 v2M449 114.5 h1M449 472.5 h1M450 473.5 h1M451 474.5 h1M452 475.5 h1M453.5 476 v2M454 478.5 h1M455 137.5 h1M455 479.5 h1M456 136.5 h1M457 135.5 h1M458 134.5 h1M459 133.5 h1M460 132.5 h1M461 131.5 h1M461 455.5 h1M462 130.5 h1M462 456.5 h1M463 129.5 h1M463 457.5 h1M464 128.5 h1M464 458.5 h1M465 459.5 h1M466 460.5 h1M467 461.5 h1M468 152.5 h1M468 462.5 h1M469 151.5 h1M469 463.5 h1M470 464.5 h1M472 149.5 h1M473 148.5 h1M474 147.5 h1M474 440.5 h1M475 146.5 h1M475 441.5 h1M476 442.5 h1M477 443.5 h1M478 144.5 h1M478 444.5 h1M479 143.5 h1M481 167.5 h1M481 446.5 h1M482 447.5 h1M483 448.5 h1M484 165.5 h1M484 449.5 h1M485 164.5 h1M485 424.5 h1M488 162.5 h1M488 426.5 h1M489 161.5 h1M491 428.5 h1M492 159.5 h1M492 183.5 h1M494 430.5 h1M495 181.5 h1M496 408.5 h1M497 432.5 h1M500 178.5 h1M501 201.5 h1M503 176.5 h1"/>
</g>
<g id="rings">
<path stroke="#fff" d="M285 15.5 h28M275 16.5 h10M313 16.5 h10M265 17.5 h10M323 17.5 h10M255 18.5 h10M333 18.5 h10M248 19.5 h7M343 19.5 h8M243 20.5 h5M351 20.5 h5M238 21.5 h5M356 21.5 h5M234 22.5 h4M361 22.5 h4M230 23.5 h4M365 23.5 h4M226 24.5 h4M369 24.5 h3M223 25.5 h3M372 25.5 h4M220 26.5 h3M376 26.5 h3M217 27.5 h3M379 27.5 h3M214 28.5 h3M382 28.5 h3M211 29.5 h3M385 29.5 h3M207 30.5 h4M388 30.5 h3M204 31.5 h3M391 31.5 h4M201 32.5 h3M395 32.5 h3M199 33.5 h2M398 33.5 h2M197 34.5 h2M400 34.5 h2M195 35.5 h2M402 35.5 h2M192 36.5 h3M404 36.5 h3M190 37.5 h2M407 37.5 h2M188 38.5 h2M409 38.5 h2M186 39.5 h2M411 39.5 h2M183 40.5 h3M413 40.5 h3M181 41.5 h2M416 41.5 h2M179 42.5 h2M418 42.5 h2M177 43.5 h2M420 43.5 h2M174 44.5 h3M422 44.5 h3M172 45.5 h2M425 45.5 h2M170 46.5 h2M427 46.5 h2M168 47.5 h2M429 47.5 h2M166 48.5 h2M431 48.5 h2M164 49.5 h2M433 49.5 h2M162 50.5 h2M435 50.5 h2M160 51.5 h2M437 51.5 h2M158 52.5 h2M439 52.5 h2M155 54.5 h2M442 54.5 h2M153 55.5 h2M445 56.5 h2M150 57.5 h2M447 57.5 h2M147 59.5 h2M450 59.5 h2M144 61.5 h2M453 61.5 h2M141 63.5 h2M456 63.5 h2M138 65.5 h2M459 65.5 h2M136 66.5 h2M462 67.5 h2M133 68.5 h2M464 68.5 h2M130 70.5 h2M468 71.5 h2M126 73.5 h2M472 74.5 h2M115 83.5 h2M483 84.5 h2M111 86.5 h2M487 87.5 h2M487 511.5 h2M111 512.5 h2M483 514.5 h2M115 515.5 h2M472 524.5 h2M126 525.5 h2M468 527.5 h2M130 528.5 h2M133 530.5 h2M464 530.5 h2M462 531.5 h2M136 532.5 h2M138 533.5 h2M459 533.5 h2M141 535.5 h2M456 535.5 h2M144 537.5 h2M453 537.5 h2M147 539.5 h2M450 539.5 h2M150 541.5 h2M447 541.5 h2M445 542.5 h2M153 543.5 h2M155 544.5 h2M442 544.5 h2M158 546.5 h2M439 546.5 h2M160 547.5 h2M437 547.5 h2M162 548.5 h2M435 548.5 h2M164 549.5 h2M433 549.5 h2M166 550.5 h2M431 550.5 h2M168 551.5 h2M429 551.5 h2M170 552.5 h2M427 552.5 h2M172 553.5 h2M425 553.5 h2M174 554.5 h3M422 554.5 h3M177 555.5 h2M420 555.5 h2M179 556.5 h2M418 556.5 h2M181 557.5 h2M416 557.5 h2M183 558.5 h3M413 558.5 h3M186 559.5 h2M411 559.5 h2M188 560.5 h2M409 560.5 h2M190 561.5 h2M407 561.5 h2M192 562.5 h3M404 562.5 h3M195 563.5 h2M402 563.5 h2M197 564.5 h2M400 564.5 h2M199 565.5 h2M398 565.5 h2M201 566.5 h3M395 566.5 h3M204 567.5 h3M391 567.5 h4M207 568.5 h4M388 568.5 h3M211 569.5 h3M385 569.5 h3M214 570.5 h3M382 570.5 h3M217 571.5 h3M379 571.5 h3M220 572.5 h3M376 572.5 h3M223 573.5 h3M372 573.5 h4M226 574.5 h4M369 574.5 h3M230 575.5 h4M365 575.5 h4M234 576.5 h4M361 576.5 h4M238 577.5 h5M356 577.5 h5M243 578.5 h5M351 578.5 h5M248 579.5 h7M343 579.5 h8M255 580.5 h10M333 580.5 h10M265 581.5 h10M323 581.5 h10M275 582.5 h10M313 582.5 h10M285 583.5 h28M15.5 285 v28M16.5 275 v10M16.5 313 v10M17.5 265 v10M17.5 323 v10M18.5 255 v10M18.5 333 v10M19.5 248 v7M19.5 343 v8M20.5 243 v5M20.5 351 v5M21.5 238 v5M21.5 356 v5M22.5 234 v4M22.5 361 v4M23.5 230 v4M23.5 365 v4M24.5 226 v4M24.5 369 v3M25.5 223 v3M25.5 372 v4M26.5 220 v3M26.5 376 v3M27.5 217 v3M27.5 379 v3M28.5 214 v3M28.5 382 v3M29.5 211 v3M29.5 385 v3M30.5 207 v4M30.5 388 v3M31.5 204 v3M31.5 391 v4M32.5 201 v3M32.5 395 v3M33.5 199 v2M33.5 398 v2M34.5 197 v2M34.5 400 v2M35.5 195 v2M35.5 402 v2M36.5 192 v3M36.5 404 v3M37.5 190 v2M37.5 407 v2M38.5 188 v2M38.5 409 v2M39.5 186 v2M39.5 411 v2M40.5 183 v3M40.5 413 v3M41.5 181 v2M41.5 416 v2M42.5 179 v2M42.5 418 v2M43.5 177 v2M43.5 420 v2M44.5 174 v3M44.5 422 v3M45.5 172 v2M45.5 425 v2M46.5 170 v2M46.5 427 v2M47.5 168 v2M47.5 429 v2M48.5 166 v2M48.5 431 v2M49.5 164 v2M49.5 433 v2M50.5 162 v2M50.5 435 v2M51.5 160 v2M51.5 437 v2M52.5 158 v2M52.5 439 v2M53 157.5 h1M53 441.5 h1M54.5 155 v2M54.5 442 v2M55.5 153 v2M55 444.5 h1M56 152.5 h1M56.5 445 v2M57.5 150 v2M57.5 447 v2M58 149.5 h1M58 449.5 h1M59.5 147 v2M59.5 450 v2M60 146.5 h1M60 452.5 h1M61.5 144 v2M61.5 453 v2M62 143.5 h1M62 455.5 h1M63.5 141 v2M63.5 456 v2M64 140.5 h1M64 458.5 h1M65.5 138 v2M65.5 459 v2M66.5 136 v2M66 461.5 h1M67 135.5 h1M67.5 462 v2M68.5 133 v2M68.5 464 v2M69 132.5 h1M69 466.5 h1M70.5 130 v2M70 467.5 h1M71 129.5 h1M71.5 468 v2M72 128.5 h1M72 470.5 h1M73.5 126 v2M73 471.5 h1M74 125.5 h1M74.5 472 v2M75 124.5 h1M75 474.5 h1M76 123.5 h1M76 475.5 h1M77 122.5 h1M77 476.5 h1M78 121.5 h1M78 477.5 h1M79 120.5 h1M79 478.5 h1M80 119.5 h1M80 479.5 h1M81 118.5 h1M81 480.5 h1M82 117.5 h1M82 481.5 h1M83.5 115 v2M83 482.5 h1M84 114.5 h1M84.5 483 v2M85 113.5 h1M85 485.5 h1M86.5 111 v2M86 486.5 h1M87 110.5 h1M87.5 487 v2M88 109.5 h1M88 489.5 h1M89 108.5 h1M89 490.5 h1M90 107.5 h1M90 491.5 h1M91 106.5 h1M91 492.5 h1M92 105.5 h1M92 493.5 h1M93 104.5 h1M93 494.5 h1M94 103.5 h1M94 495.5 h1M95 102.5 h1M95 496.5 h1M96 101.5 h1M96 497.5 h1M97 100.5 h1M97 498.5 h1M98 99.5 h1M98 499.5 h1M99 98.5 h1M99 500.5 h1M100 97.5 h1M100 501.5 h1M101 96.5 h1M101 502.5 h1M102 95.5 h1M102 503.5 h1M103 94.5 h1M103 504.5 h1M104 93.5 h1M104 505.5 h1M105 92.5 h1M105 506.5 h1M106 91.5 h1M106 507.5 h1M107 90.5 h1M107 508.5 h1M108 89.5 h1M108 509.5 h1M109 88.5 h1M109 510.5 h1M110 87.5 h1M110 511.5 h1M113 85.5 h1M113 513.5 h1M114 84.5 h1M114 514.5 h1M117 82.5 h1M117 516.5 h1M118 81.5 h1M118 517.5 h1M119 80.5 h1M119 518.5 h1M120 79.5 h1M120 519.5 h1M121 78.5 h1M121 520.5 h1M122 77.5 h1M122 521.5 h1M123 76.5 h1M123 522.5 h1M124 75.5 h1M124 523.5 h1M125 74.5 h1M125 524.5 h1M128 72.5 h1M128 526.5 h1M129 71.5 h1M129 527.5 h1M132 69.5 h1M132 529.5 h1M135 67.5 h1M135 531.5 h1M140 64.5 h1M140 534.5 h1M143 62.5 h1M143 536.5 h1M146 60.5 h1M146 538.5 h1M149 58.5 h1M149 540.5 h1M152 56.5 h1M152 542.5 h1M157 53.5 h1M157 545.5 h1M441 53.5 h1M441 545.5 h1M444 55.5 h1M444 543.5 h1M449 58.5 h1M449 540.5 h1M452 60.5 h1M452 538.5 h1M455 62.5 h1M455 536.5 h1M458 64.5 h1M458 534.5 h1M461 66.5 h1M461 532.5 h1M466 69.5 h1M466 529.5 h1M467 70.5 h1M467 528.5 h1M470 72.5 h1M470 526.5 h1M471 73.5 h1M471 525.5 h1M474 75.5 h1M474 523.5 h1M475 76.5 h1M475 522.5 h1M476 77.5 h1M476 521.5 h1M477 78.5 h1M477 520.5 h1M478 79.5 h1M478 519.5 h1M479 80.5 h1M479 518.5 h1M480 81.5 h1M480 517.5 h1M481 82.5 h1M481 516.5 h1M482 83.5 h1M482 515.5 h1M485 85.5 h1M485 513.5 h1M486 86.5 h1M486 512.5 h1M489 88.5 h1M489 510.5 h1M490 89.5 h1M490 509.5 h1M491 90.5 h1M491 508.5 h1M492 91.5 h1M492 507.5 h1M493 92.5 h1M493 506.5 h1M494 93.5 h1M494 505.5 h1M495 94.5 h1M495 504.5 h1M496 95.5 h1M496 503.5 h1M497 96.5 h1M497 502.5 h1M498 97.5 h1M498 501.5 h1M499 98.5 h1M499 500.5 h1M500 99.5 h1M500 499.5 h1M501 100.5 h1M501 498.5 h1M502 101.5 h1M502 497.5 h1M503 102.5 h1M503 496.5 h1M504 103.5 h1M504 495.5 h1M505 104.5 h1M505 494.5 h1M506 105.5 h1M506 493.5 h1M507 106.5 h1M507 492.5 h1M508 107.5 h1M508 491.5 h1M509 108.5 h1M509 490.5 h1M510 109.5 h1M510 489.5 h1M511 110.5 h1M511.5 487 v2M512.5 111 v2M512 486.5 h1M513 113.5 h1M513 485.5 h1M514 114.5 h1M514.5 483 v2M515.5 115 v2M515 482.5 h1M516 117.5 h1M516 481.5 h1M517 118.5 h1M517 480.5 h1M518 119.5 h1M518 479.5 h1M519 120.5 h1M519 478.5 h1M520 121.5 h1M520 477.5 h1M521 122.5 h1M521 476.5 h1M522 123.5 h1M522 475.5 h1M523 124.5 h1M523 474.5 h1M524 125.5 h1M524.5 472 v2M525.5 126 v2M525 471.5 h1M526 128.5 h1M526 470.5 h1M527 129.5 h1M527.5 468 v2M528.5 130 v2M528 467.5 h1M529 132.5 h1M529 466.5 h1M530.5 133 v2M530.5 464 v2M531 135.5 h1M531.5 462 v2M532.5 136 v2M532 461.5 h1M533.5 138 v2M533.5 459 v2M534 140.5 h1M534 458.5 h1M535.5 141 v2M535.5 456 v2M536 143.5 h1M536 455.5 h1M537.5 144 v2M537.5 453 v2M538 146.5 h1M538 452.5 h1M539.5 147 v2M539.5 450 v2M540 149.5 h1M540 449.5 h1M541.5 150 v2M541.5 447 v2M542 152.5 h1M542.5 445 v2M543.5 153 v2M543 444.5 h1M544.5 155 v2M544.5 442 v2M545 157.5 h1M545 441.5 h1M546.5 158 v2M546.5 439 v2M547.5 160 v2M547.5 437 v2M548.5 162 v2M548.5 435 v2M549.5 164 v2M549.5 433 v2M550.5 166 v2M550.5 431 v2M551.5 168 v2M551.5 429 v2M552.5 170 v2M552.5 427 v2M553.5 172 v2M553.5 425 v2M554.5 174 v3M554.5 422 v3M555.5 177 v2M555.5 420 v2M556.5 179 v2M556.5 418 v2M557.5 181 v2M557.5 416 v2M558.5 183 v3M558.5 413 v3M559.5 186 v2M559.5 411 v2M560.5 188 v2M560.5 409 v2M561.5 190 v2M561.5 407 v2M562.5 192 v3M562.5 404 v3M563.5 195 v2M563.5 402 v2M564.5 197 v2M564.5 400 v2M565.5 199 v2M565.5 398 v2M566.5 201 v3M566.5 395 v3M567.5 204 v3M567.5 391 v4M568.5 207 v4M568.5 388 v3M569.5 211 v3M569.5 385 v3M570.5 214 v3M570.5 382 v3M571.5 217 v3M571.5 379 v3M572.5 220 v3M572.5 376 v3M573.5 223 v3M573.5 372 v4M574.5 226 v4M574.5 369 v3M575.5 230 v4M575.5 365 v4M576.5 234 v4M576.5 361 v4M577.5 238 v5M577.5 356 v5M578.5 243 v5M578.5 351 v5M579.5 248 v7M579.5 343 v8M580.5 255 v10M580.5 333 v10M581.5 265 v10M581.5 323 v10M582.5 275 v10M582.5 313 v10M583.5 285 v28"/>
<path stroke="#fff" d="M287 60.5 h24M270 61.5 h17M311 61.5 h17M264 62.5 h6M328 62.5 h6M260 63.5 h4M334 63.5 h4M254 64.5 h6M338 64.5 h6M248 65.5 h6M344 65.5 h6M244 66.5 h4M350 66.5 h4M240 67.5 h4M354 67.5 h5M236 68.5 h4M359 68.5 h4M232 69.5 h4M363 69.5 h4M229 70.5 h3M367 70.5 h2M227 71.5 h2M369 71.5 h3M224 72.5 h3M372 72.5 h3M220 73.5 h4M375 73.5 h4M217 74.5 h3M379 74.5 h3M214 75.5 h3M382 75.5 h2M212 76.5 h2M384 76.5 h3M209 77.5 h3M387 77.5 h2M207 78.5 h2M389 78.5 h2M205 79.5 h2M391 79.5 h2M203 80.5 h2M393 80.5 h2M201 81.5 h2M395 81.5 h3M199 82.5 h2M398 82.5 h2M197 83.5 h2M400 83.5 h2M194 84.5 h3M402 84.5 h2M192 85.5 h2M404 85.5 h2M190 86.5 h2M406 86.5 h2M188 87.5 h2M408 87.5 h2M410 88.5 h2M185 89.5 h2M412 89.5 h2M183 90.5 h2M414 90.5 h2M181 91.5 h2M416 91.5 h2M178 93.5 h2M419 93.5 h2M176 94.5 h2M421 94.5 h2M174 95.5 h2M423 95.5 h2M171 97.5 h2M426 97.5 h2M167 100.5 h2M430 100.5 h2M164 102.5 h2M433 102.5 h2M160 105.5 h2M437 105.5 h2M157 107.5 h2M440 107.5 h2M153 110.5 h2M444 110.5 h2M149 113.5 h2M449 114.5 h2M142 119.5 h2M455 119.5 h2M136 124.5 h2M462 125.5 h2M462 473.5 h2M136 474.5 h2M142 479.5 h2M455 479.5 h2M449 484.5 h2M149 485.5 h2M153 488.5 h2M444 488.5 h2M157 491.5 h2M440 491.5 h2M160 493.5 h2M437 493.5 h2M164 496.5 h2M433 496.5 h2M167 498.5 h2M430 498.5 h2M171 501.5 h2M426 501.5 h2M174 503.5 h2M423 503.5 h2M176 504.5 h2M421 504.5 h2M178 505.5 h2M419 505.5 h2M181 507.5 h2M416 507.5 h2M183 508.5 h2M414 508.5 h2M185 509.5 h2M412 509.5 h2M410 510.5 h2M188 511.5 h2M408 511.5 h2M190 512.5 h2M406 512.5 h2M192 513.5 h2M404 513.5 h2M194 514.5 h3M402 514.5 h2M197 515.5 h2M400 515.5 h2M199 516.5 h2M398 516.5 h2M201 517.5 h2M395 517.5 h3M203 518.5 h2M393 518.5 h2M205 519.5 h2M391 519.5 h2M207 520.5 h2M389 520.5 h2M209 521.5 h3M387 521.5 h2M212 522.5 h2M384 522.5 h3M214 523.5 h3M382 523.5 h2M217 524.5 h3M379 524.5 h3M220 525.5 h4M375 525.5 h4M224 526.5 h3M372 526.5 h3M227 527.5 h2M369 527.5 h3M229 528.5 h3M367 528.5 h2M232 529.5 h4M363 529.5 h4M236 530.5 h4M359 530.5 h4M240 531.5 h4M354 531.5 h5M244 532.5 h4M350 532.5 h4M248 533.5 h6M344 533.5 h6M254 534.5 h6M338 534.5 h6M260 535.5 h4M334 535.5 h4M264 536.5 h6M328 536.5 h6M270 537.5 h17M311 537.5 h17M287 538.5 h24M60.5 287 v24M61.5 270 v17M61.5 311 v17M62.5 264 v6M62.5 328 v6M63.5 260 v4M63.5 334 v4M64.5 254 v6M64.5 338 v6M65.5 248 v6M65.5 344 v6M66.5 244 v4M66.5 350 v4M67.5 240 v4M67.5 354 v5M68.5 236 v4M68.5 359 v4M69.5 232 v4M69.5 363 v4M70.5 229 v3M70.5 367 v2M71.5 227 v2M71.5 369 v3M72.5 224 v3M72.5 372 v3M73.5 220 v4M73.5 375 v4M74.5 217 v3M74.5 379 v3M75.5 214 v3M75.5 382 v2M76.5 212 v2M76.5 384 v3M77.5 209 v3M77.5 387 v2M78.5 207 v2M78.5 389 v2M79.5 205 v2M79.5 391 v2M80.5 203 v2M80.5 393 v2M81.5 201 v2M81.5 395 v3M82.5 199 v2M82.5 398 v2M83.5 197 v2M83.5 400 v2M84.5 194 v3M84.5 402 v2M85.5 192 v2M85.5 404 v2M86.5 190 v2M86.5 406 v2M87.5 188 v2M87.5 408 v2M88 187.5 h1M88.5 410 v2M89.5 185 v2M89.5 412 v2M90.5 183 v2M90.5 414 v2M91.5 181 v2M91.5 416 v2M92 180.5 h1M92 418.5 h1M93.5 178 v2M93.5 419 v2M94.5 176 v2M94.5 421 v2M95.5 174 v2M95.5 423 v2M96 173.5 h1M96 425.5 h1M97.5 171 v2M97.5 426 v2M98 170.5 h1M98 428.5 h1M99 169.5 h1M99 429.5 h1M100.5 167 v2M100.5 430 v2M101 166.5 h1M101 432.5 h1M102.5 164 v2M102.5 433 v2M103 163.5 h1M103 435.5 h1M104 162.5 h1M104 436.5 h1M105.5 160 v2M105.5 437 v2M106 159.5 h1M106 439.5 h1M107.5 157 v2M107.5 440 v2M108 156.5 h1M108 442.5 h1M109 155.5 h1M109 443.5 h1M110.5 153 v2M110.5 444 v2M111 152.5 h1M111 446.5 h1M112 151.5 h1M112 447.5 h1M113.5 149 v2M113 448.5 h1M114 148.5 h1M114.5 449 v2M115 147.5 h1M115 451.5 h1M116 146.5 h1M116 452.5 h1M117 145.5 h1M117 453.5 h1M118 144.5 h1M118 454.5 h1M119.5 142 v2M119.5 455 v2M120 141.5 h1M120 457.5 h1M121 140.5 h1M121 458.5 h1M122 139.5 h1M122 459.5 h1M123 138.5 h1M123 460.5 h1M124.5 136 v2M124 461.5 h1M125 135.5 h1M125.5 462 v2M126 134.5 h1M126 464.5 h1M127 133.5 h1M127 465.5 h1M128 132.5 h1M128 466.5 h1M129 131.5 h1M129 467.5 h1M130 130.5 h1M130 468.5 h1M131 129.5 h1M131 469.5 h1M132 128.5 h1M132 470.5 h1M133 127.5 h1M133 471.5 h1M134 126.5 h1M134 472.5 h1M135 125.5 h1M135 473.5 h1M138 123.5 h1M138 475.5 h1M139 122.5 h1M139 476.5 h1M140 121.5 h1M140 477.5 h1M141 120.5 h1M141 478.5 h1M144 118.5 h1M144 480.5 h1M145 117.5 h1M145 481.5 h1M146 116.5 h1M146 482.5 h1M147 115.5 h1M147 483.5 h1M148 114.5 h1M148 484.5 h1M151 112.5 h1M151 486.5 h1M152 111.5 h1M152 487.5 h1M155 109.5 h1M155 489.5 h1M156 108.5 h1M156 490.5 h1M159 106.5 h1M159 492.5 h1M162 104.5 h1M162 494.5 h1M163 103.5 h1M163 495.5 h1M166 101.5 h1M166 497.5 h1M169 99.5 h1M169 499.5 h1M170 98.5 h1M170 500.5 h1M173 96.5 h1M173 502.5 h1M180 92.5 h1M180 506.5 h1M187 88.5 h1M187 510.5 h1M418 92.5 h1M418 506.5 h1M425 96.5 h1M425 502.5 h1M428 98.5 h1M428 500.5 h1M429 99.5 h1M429 499.5 h1M432 101.5 h1M432 497.5 h1M435 103.5 h1M435 495.5 h1M436 104.5 h1M436 494.5 h1M439 106.5 h1M439 492.5 h1M442 108.5 h1M442 490.5 h1M443 109.5 h1M443 489.5 h1M446 111.5 h1M446 487.5 h1M447 112.5 h1M447 486.5 h1M448 113.5 h1M448 485.5 h1M451 115.5 h1M451 483.5 h1M452 116.5 h1M452 482.5 h1M453 117.5 h1M453 481.5 h1M454 118.5 h1M454 480.5 h1M457 120.5 h1M457 478.5 h1M458 121.5 h1M458 477.5 h1M459 122.5 h1M459 476.5 h1M460 123.5 h1M460 475.5 h1M461 124.5 h1M461 474.5 h1M464 126.5 h1M464 472.5 h1M465 127.5 h1M465 471.5 h1M466 128.5 h1M466 470.5 h1M467 129.5 h1M467 469.5 h1M468 130.5 h1M468 468.5 h1M469 131.5 h1M469 467.5 h1M470 132.5 h1M470 466.5 h1M471 133.5 h1M471 465.5 h1M472 134.5 h1M472 464.5 h1M473 135.5 h1M473.5 462 v2M474.5 136 v2M474 461.5 h1M475 138.5 h1M475 460.5 h1M476 139.5 h1M476 459.5 h1M477 140.5 h1M477 458.5 h1M478 141.5 h1M478 457.5 h1M479.5 142 v2M479.5 455 v2M480 144.5 h1M480 454.5 h1M481 145.5 h1M481 453.5 h1M482 146.5 h1M482 452.5 h1M483 147.5 h1M483 451.5 h1M484 148.5 h1M484.5 449 v2M485.5 149 v2M485 448.5 h1M486 151.5 h1M486 447.5 h1M487 152.5 h1M487 446.5 h1M488.5 153 v2M488.5 444 v2M489 155.5 h1M489 443.5 h1M490 156.5 h1M490 442.5 h1M491.5 157 v2M491.5 440 v2M492 159.5 h1M492 439.5 h1M493.5 160 v2M493.5 437 v2M494 162.5 h1M494 436.5 h1M495 163.5 h1M495 435.5 h1M496.5 164 v2M496.5 433 v2M497 166.5 h1M497 432.5 h1M498.5 167 v2M498.5 430 v2M499 169.5 h1M499 429.5 h1M500 170.5 h1M500 428.5 h1M501.5 171 v2M501.5 426 v2M502 173.5 h1M502 425.5 h1M503.5 174 v2M503.5 423 v2M504.5 176 v2M504.5 421 v2M505.5 178 v2M505.5 419 v2M506 180.5 h1M506 418.5 h1M507.5 181 v2M507.5 416 v2M508.5 183 v2M508.5 414 v2M509.5 185 v2M509.5 412 v2M510 187.5 h1M510.5 410 v2M511.5 188 v2M511.5 408 v2M512.5 190 v2M512.5 406 v2M513.5 192 v2M513.5 404 v2M514.5 194 v3M514.5 402 v2M515.5 197 v2M515.5 400 v2M516.5 199 v2M516.5 398 v2M517.5 201 v2M517.5 395 v3M518.5 203 v2M518.5 393 v2M519.5 205 v2M519.5 391 v2M520.5 207 v2M520.5 389 v2M521.5 209 v3M521.5 387 v2M522.5 212 v2M522.5 384 v3M523.5 214 v3M523.5 382 v2M524.5 217 v3M524.5 379 v3M525.5 220 v4M525.5 375 v4M526.5 224 v3M526.5 372 v3M527.5 227 v2M527.5 369 v3M528.5 229 v3M528.5 367 v2M529.5 232 v4M529.5 363 v4M530.5 236 v4M530.5 359 v4M531.5 240 v4M531.5 354 v5M532.5 244 v4M532.5 350 v4M533.5 248 v6M533.5 344 v6M534.5 254 v6M534.5 338 v6M535.5 260 v4M535.5 334 v4M536.5 264 v6M536.5 328 v6M537.5 270 v17M537.5 311 v17M538.5 287 v24"/>
<path stroke="#fff" d="M288 75.5 h22M272 76.5 h16M310 76.5 h16M265 77.5 h7M326 77.5 h8M259 78.5 h6M334 78.5 h5M255 79.5 h4M339 79.5 h4M251 80.5 h4M343 80.5 h4M247 81.5 h4M347 81.5 h4M244 82.5 h3M351 82.5 h4M240 83.5 h4M355 83.5 h4M236 84.5 h4M359 84.5 h3M232 85.5 h4M362 85.5 h4M229 86.5 h3M366 86.5 h4M227 87.5 h2M370 87.5 h2M225 88.5 h2M372 88.5 h2M221 89.5 h4M374 89.5 h3M217 90.5 h4M377 90.5 h4M214 91.5 h3M381 91.5 h4M212 92.5 h2M385 92.5 h2M210 93.5 h2M387 93.5 h2M208 94.5 h2M389 94.5 h2M206 95.5 h2M391 95.5 h2M204 96.5 h2M393 96.5 h2M202 97.5 h2M395 97.5 h2M200 98.5 h2M397 98.5 h2M198 99.5 h2M399 99.5 h2M196 100.5 h2M401 100.5 h2M194 101.5 h2M403 101.5 h2M192 102.5 h2M405 102.5 h2M190 103.5 h2M407 103.5 h2M188 104.5 h2M409 104.5 h2M185 106.5 h2M412 106.5 h2M182 108.5 h2M415 108.5 h2M179 110.5 h2M418 110.5 h2M177 111.5 h2M420 111.5 h2M175 112.5 h2M422 112.5 h2M171 115.5 h2M427 116.5 h2M166 119.5 h2M431 119.5 h2M162 122.5 h2M435 122.5 h2M158 125.5 h2M440 126.5 h2M152 130.5 h2M446 131.5 h2M446 467.5 h2M152 468.5 h2M440 472.5 h2M158 473.5 h2M162 476.5 h2M435 476.5 h2M166 479.5 h2M431 479.5 h2M427 482.5 h2M171 483.5 h2M175 486.5 h2M422 486.5 h2M177 487.5 h2M420 487.5 h2M179 488.5 h2M418 488.5 h2M182 490.5 h2M415 490.5 h2M185 492.5 h2M412 492.5 h2M188 494.5 h2M409 494.5 h2M190 495.5 h2M407 495.5 h2M192 496.5 h2M405 496.5 h2M194 497.5 h2M403 497.5 h2M196 498.5 h2M401 498.5 h2M198 499.5 h2M399 499.5 h2M200 500.5 h2M397 500.5 h2M202 501.5 h2M395 501.5 h2M204 502.5 h2M393 502.5 h2M206 503.5 h2M391 503.5 h2M208 504.5 h2M389 504.5 h2M210 505.5 h2M387 505.5 h2M212 506.5 h2M385 506.5 h2M214 507.5 h3M381 507.5 h4M217 508.5 h4M377 508.5 h4M221 509.5 h4M374 509.5 h3M225 510.5 h2M372 510.5 h2M227 511.5 h2M370 511.5 h2M229 512.5 h3M366 512.5 h4M232 513.5 h4M362 513.5 h4M236 514.5 h4M359 514.5 h3M240 515.5 h4M355 515.5 h4M244 516.5 h3M351 516.5 h4M247 517.5 h4M347 517.5 h4M251 518.5 h4M343 518.5 h4M255 519.5 h4M339 519.5 h4M259 520.5 h6M334 520.5 h5M265 521.5 h7M326 521.5 h8M272 522.5 h16M310 522.5 h16M288 523.5 h22M75.5 288 v22M76.5 272 v16M76.5 310 v16M77.5 265 v7M77.5 326 v8M78.5 259 v6M78.5 334 v5M79.5 255 v4M79.5 339 v4M80.5 251 v4M80.5 343 v4M81.5 247 v4M81.5 347 v4M82.5 244 v3M82.5 351 v4M83.5 240 v4M83.5 355 v4M84.5 236 v4M84.5 359 v3M85.5 232 v4M85.5 362 v4M86.5 229 v3M86.5 366 v4M87.5 227 v2M87.5 370 v2M88.5 225 v2M88.5 372 v2M89.5 221 v4M89.5 374 v3M90.5 217 v4M90.5 377 v4M91.5 214 v3M91.5 381 v4M92.5 212 v2M92.5 385 v2M93.5 210 v2M93.5 387 v2M94.5 208 v2M94.5 389 v2M95.5 206 v2M95.5 391 v2M96.5 204 v2M96.5 393 v2M97.5 202 v2M97.5 395 v2M98.5 200 v2M98.5 397 v2M99.5 198 v2M99.5 399 v2M100.5 196 v2M100.5 401 v2M101.5 194 v2M101.5 403 v2M102.5 192 v2M102.5 405 v2M103.5 190 v2M103.5 407 v2M104.5 188 v2M104.5 409 v2M105 187.5 h1M105 411.5 h1M106.5 185 v2M106.5 412 v2M107 184.5 h1M107 414.5 h1M108.5 182 v2M108.5 415 v2M109 181.5 h1M109 417.5 h1M110.5 179 v2M110.5 418 v2M111.5 177 v2M111.5 420 v2M112.5 175 v2M112.5 422 v2M113 174.5 h1M113 424.5 h1M114 173.5 h1M114 425.5 h1M115.5 171 v2M115 426.5 h1M116 170.5 h1M116.5 427 v2M117 169.5 h1M117 429.5 h1M118 168.5 h1M118 430.5 h1M119.5 166 v2M119.5 431 v2M120 165.5 h1M120 433.5 h1M121 164.5 h1M121 434.5 h1M122.5 162 v2M122.5 435 v2M123 161.5 h1M123 437.5 h1M124 160.5 h1M124 438.5 h1M125.5 158 v2M125 439.5 h1M126 157.5 h1M126.5 440 v2M127 156.5 h1M127 442.5 h1M128 155.5 h1M128 443.5 h1M129 154.5 h1M129 444.5 h1M130.5 152 v2M130 445.5 h1M131 151.5 h1M131.5 446 v2M132 150.5 h1M132 448.5 h1M133 149.5 h1M133 449.5 h1M134 148.5 h1M134 450.5 h1M135 147.5 h1M135 451.5 h1M136 146.5 h1M136 452.5 h1M137 145.5 h1M137 453.5 h1M138 144.5 h1M138 454.5 h1M139 143.5 h1M139 455.5 h1M140 142.5 h1M140 456.5 h1M141 141.5 h1M141 457.5 h1M142 140.5 h1M142 458.5 h1M143 139.5 h1M143 459.5 h1M144 138.5 h1M144 460.5 h1M145 137.5 h1M145 461.5 h1M146 136.5 h1M146 462.5 h1M147 135.5 h1M147 463.5 h1M148 134.5 h1M148 464.5 h1M149 133.5 h1M149 465.5 h1M150 132.5 h1M150 466.5 h1M151 131.5 h1M151 467.5 h1M154 129.5 h1M154 469.5 h1M155 128.5 h1M155 470.5 h1M156 127.5 h1M156 471.5 h1M157 126.5 h1M157 472.5 h1M160 124.5 h1M160 474.5 h1M161 123.5 h1M161 475.5 h1M164 121.5 h1M164 477.5 h1M165 120.5 h1M165 478.5 h1M168 118.5 h1M168 480.5 h1M169 117.5 h1M169 481.5 h1M170 116.5 h1M170 482.5 h1M173 114.5 h1M173 484.5 h1M174 113.5 h1M174 485.5 h1M181 109.5 h1M181 489.5 h1M184 107.5 h1M184 491.5 h1M187 105.5 h1M187 493.5 h1M411 105.5 h1M411 493.5 h1M414 107.5 h1M414 491.5 h1M417 109.5 h1M417 489.5 h1M424 113.5 h1M424 485.5 h1M425 114.5 h1M425 484.5 h1M426 115.5 h1M426 483.5 h1M429 117.5 h1M429 481.5 h1M430 118.5 h1M430 480.5 h1M433 120.5 h1M433 478.5 h1M434 121.5 h1M434 477.5 h1M437 123.5 h1M437 475.5 h1M438 124.5 h1M438 474.5 h1M439 125.5 h1M439 473.5 h1M442 127.5 h1M442 471.5 h1M443 128.5 h1M443 470.5 h1M444 129.5 h1M444 469.5 h1M445 130.5 h1M445 468.5 h1M448 132.5 h1M448 466.5 h1M449 133.5 h1M449 465.5 h1M450 134.5 h1M450 464.5 h1M451 135.5 h1M451 463.5 h1M452 136.5 h1M452 462.5 h1M453 137.5 h1M453 461.5 h1M454 138.5 h1M454 460.5 h1M455 139.5 h1M455 459.5 h1M456 140.5 h1M456 458.5 h1M457 141.5 h1M457 457.5 h1M458 142.5 h1M458 456.5 h1M459 143.5 h1M459 455.5 h1M460 144.5 h1M460 454.5 h1M461 145.5 h1M461 453.5 h1M462 146.5 h1M462 452.5 h1M463 147.5 h1M463 451.5 h1M464 148.5 h1M464 450.5 h1M465 149.5 h1M465 449.5 h1M466 150.5 h1M466 448.5 h1M467 151.5 h1M467.5 446 v2M468.5 152 v2M468 445.5 h1M469 154.5 h1M469 444.5 h1M470 155.5 h1M470 443.5 h1M471 156.5 h1M471 442.5 h1M472 157.5 h1M472.5 440 v2M473.5 158 v2M473 439.5 h1M474 160.5 h1M474 438.5 h1M475 161.5 h1M475 437.5 h1M476.5 162 v2M476.5 435 v2M477 164.5 h1M477 434.5 h1M478 165.5 h1M478 433.5 h1M479.5 166 v2M479.5 431 v2M480 168.5 h1M480 430.5 h1M481 169.5 h1M481 429.5 h1M482 170.5 h1M482.5 427 v2M483.5 171 v2M483 426.5 h1M484 173.5 h1M484 425.5 h1M485 174.5 h1M485 424.5 h1M486.5 175 v2M486.5 422 v2M487.5 177 v2M487.5 420 v2M488.5 179 v2M488.5 418 v2M489 181.5 h1M489 417.5 h1M490.5 182 v2M490.5 415 v2M491 184.5 h1M491 414.5 h1M492.5 185 v2M492.5 412 v2M493 187.5 h1M493 411.5 h1M494.5 188 v2M494.5 409 v2M495.5 190 v2M495.5 407 v2M496.5 192 v2M496.5 405 v2M497.5 194 v2M497.5 403 v2M498.5 196 v2M498.5 401 v2M499.5 198 v2M499.5 399 v2M500.5 200 v2M500.5 397 v2M501.5 202 v2M501.5 395 v2M502.5 204 v2M502.5 393 v2M503.5 206 v2M503.5 391 v2M504.5 208 v2M504.5 389 v2M505.5 210 v2M505.5 387 v2M506.5 212 v2M506.5 385 v2M507.5 214 v3M507.5 381 v4M508.5 217 v4M508.5 377 v4M509.5 221 v4M509.5 374 v3M510.5 225 v2M510.5 372 v2M511.5 227 v2M511.5 370 v2M512.5 229 v3M512.5 366 v4M513.5 232 v4M513.5 362 v4M514.5 236 v4M514.5 359 v3M515.5 240 v4M515.5 355 v4M516.5 244 v3M516.5 351 v4M517.5 247 v4M517.5 347 v4M518.5 251 v4M518.5 343 v4M519.5 255 v4M519.5 339 v4M520.5 259 v6M520.5 334 v5M521.5 265 v7M521.5 326 v8M522.5 272 v16M522.5 310 v16M523.5 288 v22"/>
<path stroke="#fff" d="M283 105.5 h33M276 106.5 h7M316 106.5 h7M269 107.5 h7M323 107.5 h6M263 108.5 h6M329 108.5 h7M258 109.5 h5M336 109.5 h5M254 110.5 h4M341 110.5 h4M251 111.5 h3M345 111.5 h3M248 112.5 h3M348 112.5 h3M245 113.5 h3M351 113.5 h3M241 114.5 h4M354 114.5 h4M238 115.5 h3M358 115.5 h3M235 116.5 h3M361 116.5 h3M232 117.5 h3M364 117.5 h3M229 118.5 h3M367 118.5 h3M226 119.5 h3M370 119.5 h3M224 120.5 h2M373 120.5 h2M222 121.5 h2M375 121.5 h2M219 122.5 h3M377 122.5 h2M217 123.5 h2M379 123.5 h2M215 124.5 h2M381 124.5 h2M213 125.5 h2M383 125.5 h2M211 126.5 h2M385 126.5 h2M209 127.5 h2M387 127.5 h2M207 128.5 h2M389 128.5 h2M205 129.5 h2M391 129.5 h2M203 130.5 h2M393 130.5 h2M395 131.5 h2M200 132.5 h2M397 132.5 h2M197 134.5 h2M400 134.5 h2M194 136.5 h2M403 136.5 h2M192 137.5 h2M405 137.5 h2M189 139.5 h2M408 139.5 h2M186 141.5 h2M411 141.5 h2M182 144.5 h2M415 144.5 h2M177 148.5 h2M421 149.5 h2M171 153.5 h2M426 153.5 h2M171 445.5 h2M426 445.5 h2M421 449.5 h2M177 450.5 h2M182 454.5 h2M415 454.5 h2M186 457.5 h2M411 457.5 h2M189 459.5 h2M408 459.5 h2M192 461.5 h2M405 461.5 h2M194 462.5 h2M403 462.5 h2M197 464.5 h2M400 464.5 h2M200 466.5 h2M397 466.5 h2M395 467.5 h2M203 468.5 h2M393 468.5 h2M205 469.5 h2M391 469.5 h2M207 470.5 h2M389 470.5 h2M209 471.5 h2M387 471.5 h2M211 472.5 h2M385 472.5 h2M213 473.5 h2M383 473.5 h2M215 474.5 h2M381 474.5 h2M217 475.5 h2M379 475.5 h2M219 476.5 h3M377 476.5 h2M222 477.5 h2M375 477.5 h2M224 478.5 h2M373 478.5 h2M226 479.5 h3M370 479.5 h3M229 480.5 h3M367 480.5 h3M232 481.5 h3M364 481.5 h3M235 482.5 h3M361 482.5 h3M238 483.5 h3M358 483.5 h3M241 484.5 h4M354 484.5 h4M245 485.5 h3M351 485.5 h3M248 486.5 h3M348 486.5 h3M251 487.5 h3M345 487.5 h3M254 488.5 h4M341 488.5 h4M258 489.5 h5M336 489.5 h5M263 490.5 h6M329 490.5 h7M269 491.5 h7M323 491.5 h6M276 492.5 h7M316 492.5 h7M283 493.5 h33M105.5 283 v33M106.5 276 v7M106.5 316 v7M107.5 269 v7M107.5 323 v6M108.5 263 v6M108.5 329 v7M109.5 258 v5M109.5 336 v5M110.5 254 v4M110.5 341 v4M111.5 251 v3M111.5 345 v3M112.5 248 v3M112.5 348 v3M113.5 245 v3M113.5 351 v3M114.5 241 v4M114.5 354 v4M115.5 238 v3M115.5 358 v3M116.5 235 v3M116.5 361 v3M117.5 232 v3M117.5 364 v3M118.5 229 v3M118.5 367 v3M119.5 226 v3M119.5 370 v3M120.5 224 v2M120.5 373 v2M121.5 222 v2M121.5 375 v2M122.5 219 v3M122.5 377 v2M123.5 217 v2M123.5 379 v2M124.5 215 v2M124.5 381 v2M125.5 213 v2M125.5 383 v2M126.5 211 v2M126.5 385 v2M127.5 209 v2M127.5 387 v2M128.5 207 v2M128.5 389 v2M129.5 205 v2M129.5 391 v2M130.5 203 v2M130.5 393 v2M131 202.5 h1M131.5 395 v2M132.5 200 v2M132.5 397 v2M133 199.5 h1M133 399.5 h1M134.5 197 v2M134.5 400 v2M135 196.5 h1M135 402.5 h1M136.5 194 v2M136.5 403 v2M137.5 192 v2M137.5 405 v2M138 191.5 h1M138 407.5 h1M139.5 189 v2M139.5 408 v2M140 188.5 h1M140 410.5 h1M141.5 186 v2M141.5 411 v2M142 185.5 h1M142 413.5 h1M143 184.5 h1M143 414.5 h1M144.5 182 v2M144.5 415 v2M145 181.5 h1M145 417.5 h1M146 180.5 h1M146 418.5 h1M147 179.5 h1M147 419.5 h1M148.5 177 v2M148 420.5 h1M149 176.5 h1M149.5 421 v2M150 175.5 h1M150 423.5 h1M151 174.5 h1M151 424.5 h1M152 173.5 h1M152 425.5 h1M153.5 171 v2M153.5 426 v2M154 170.5 h1M154 428.5 h1M155 169.5 h1M155 429.5 h1M156 168.5 h1M156 430.5 h1M157 167.5 h1M157 431.5 h1M158 166.5 h1M158 432.5 h1M159 165.5 h1M159 433.5 h1M160 164.5 h1M160 434.5 h1M161 163.5 h1M161 435.5 h1M162 162.5 h1M162 436.5 h1M163 161.5 h1M163 437.5 h1M164 160.5 h1M164 438.5 h1M165 159.5 h1M165 439.5 h1M166 158.5 h1M166 440.5 h1M167 157.5 h1M167 441.5 h1M168 156.5 h1M168 442.5 h1M169 155.5 h1M169 443.5 h1M170 154.5 h1M170 444.5 h1M173 152.5 h1M173 446.5 h1M174 151.5 h1M174 447.5 h1M175 150.5 h1M175 448.5 h1M176 149.5 h1M176 449.5 h1M179 147.5 h1M179 451.5 h1M180 146.5 h1M180 452.5 h1M181 145.5 h1M181 453.5 h1M184 143.5 h1M184 455.5 h1M185 142.5 h1M185 456.5 h1M188 140.5 h1M188 458.5 h1M191 138.5 h1M191 460.5 h1M196 135.5 h1M196 463.5 h1M199 133.5 h1M199 465.5 h1M202 131.5 h1M202 467.5 h1M399 133.5 h1M399 465.5 h1M402 135.5 h1M402 463.5 h1M407 138.5 h1M407 460.5 h1M410 140.5 h1M410 458.5 h1M413 142.5 h1M413 456.5 h1M414 143.5 h1M414 455.5 h1M417 145.5 h1M417 453.5 h1M418 146.5 h1M418 452.5 h1M419 147.5 h1M419 451.5 h1M420 148.5 h1M420 450.5 h1M423 150.5 h1M423 448.5 h1M424 151.5 h1M424 447.5 h1M425 152.5 h1M425 446.5 h1M428 154.5 h1M428 444.5 h1M429 155.5 h1M429 443.5 h1M430 156.5 h1M430 442.5 h1M431 157.5 h1M431 441.5 h1M432 158.5 h1M432 440.5 h1M433 159.5 h1M433 439.5 h1M434 160.5 h1M434 438.5 h1M435 161.5 h1M435 437.5 h1M436 162.5 h1M436 436.5 h1M437 163.5 h1M437 435.5 h1M438 164.5 h1M438 434.5 h1M439 165.5 h1M439 433.5 h1M440 166.5 h1M440 432.5 h1M441 167.5 h1M441 431.5 h1M442 168.5 h1M442 430.5 h1M443 169.5 h1M443 429.5 h1M444 170.5 h1M444 428.5 h1M445.5 171 v2M445.5 426 v2M446 173.5 h1M446 425.5 h1M447 174.5 h1M447 424.5 h1M448 175.5 h1M448 423.5 h1M449 176.5 h1M449.5 421 v2M450.5 177 v2M450 420.5 h1M451 179.5 h1M451 419.5 h1M452 180.5 h1M452 418.5 h1M453 181.5 h1M453 417.5 h1M454.5 182 v2M454.5 415 v2M455 184.5 h1M455 414.5 h1M456 185.5 h1M456 413.5 h1M457.5 186 v2M457.5 411 v2M458 188.5 h1M458 410.5 h1M459.5 189 v2M459.5 408 v2M460 191.5 h1M460 407.5 h1M461.5 192 v2M461.5 405 v2M462.5 194 v2M462.5 403 v2M463 196.5 h1M463 402.5 h1M464.5 197 v2M464.5 400 v2M465 199.5 h1M465 399.5 h1M466.5 200 v2M466.5 397 v2M467 202.5 h1M467.5 395 v2M468.5 203 v2M468.5 393 v2M469.5 205 v2M469.5 391 v2M470.5 207 v2M470.5 389 v2M471.5 209 v2M471.5 387 v2M472.5 211 v2M472.5 385 v2M473.5 213 v2M473.5 383 v2M474.5 215 v2M474.5 381 v2M475.5 217 v2M475.5 379 v2M476.5 219 v3M476.5 377 v2M477.5 222 v2M477.5 375 v2M478.5 224 v2M478.5 373 v2M479.5 226 v3M479.5 370 v3M480.5 229 v3M480.5 367 v3M481.5 232 v3M481.5 364 v3M482.5 235 v3M482.5 361 v3M483.5 238 v3M483.5 358 v3M484.5 241 v4M484.5 354 v4M485.5 245 v3M485.5 351 v3M486.5 248 v3M486.5 348 v3M487.5 251 v3M487.5 345 v3M488.5 254 v4M488.5 341 v4M489.5 258 v5M489.5 336 v5M490.5 263 v6M490.5 329 v7M491.5 269 v7M491.5 323 v6M492.5 276 v7M492.5 316 v7M493.5 283 v33"/>
</g>
<g id="cusps">
<path stroke="#fff" d="M175.5 45 v2M176.5 47 v2M177.5 49 v2M178.5 51 v2M179.5 53 v2M180.5 55 v2M181.5 57 v2M182.5 59 v2M183.5 61 v2M184.5 63 v2M185.5 65 v2M186.5 67 v2M187.5 69 v2M188.5 71 v2M189.5 73 v2M190.5 75 v2M191.5 77 v2M192.5 79 v2M193.5 81 v2M194.5 83 v2"/>
<path stroke="#fff" d="M75 299.5 h30"/>
<path stroke="#fff" d="M65 142.5 h2M68 144.5 h2M71 146.5 h2M74 148.5 h2M77 150.5 h2M80 152.5 h2M83 154.5 h2M86 156.5 h2M89 158.5 h2M92 160.5 h2M95 162.5 h2M98 164.5 h2M64 141.5 h1M67 143.5 h1M70 145.5 h1M73 147.5 h1M76 149.5 h1M79 151.5 h1M82 153.5 h1M85 155.5 h1M88 157.5 h1M91 159.5 h1M94 161.5 h1M97 163.5 h1M100 165.5 h1"/>
<path stroke="#fff" d="M122 383.5 h2M120 384.5 h2M118 385.5 h2M116 386.5 h2M114 387.5 h2M112 388.5 h2M109 389.5 h3M107 390.5 h2M105 391.5 h2M103 392.5 h2M101 393.5 h2M99 394.5 h2M97 395.5 h2"/>
<path stroke="#808080" d="M125 382.5 h1M127 381.5 h1M129 380.5 h1M131 379.5 h1M133 378.5 h1M135 377.5 h1M137 376.5 h1M139 375.5 h1M141 374.5 h1M143 373.5 h1M145 372.5 h1M147 371.5 h1M149 370.5 h1M151 369.5 h1M153 368.5 h1M155 367.5 h1M157 366.5 h1M159 365.5 h1M161 364.5 h1M163 364.5 h1M165 363.5 h1M167 362.5 h1M169 361.5 h1M171 360.5 h1M173 359.5 h1M175 358.5 h1M177 357.5 h1M179 356.5 h1M181 355.5 h1M183 354.5 h1M185 353.5 h1M187 352.5 h1M189 351.5 h1M191 350.5 h1M193 349.5 h1M195 348.5 h1M197 347.5 h1M199 346.5 h1M201 345.5 h1M203 345.5 h1M205 344.5 h1M207 343.5 h1M209 342.5 h1M211 341.5 h1M213 340.5 h1M215 339.5 h1M217 338.5 h1M219 337.5 h1M221 336.5 h1M223 335.5 h1M225 334.5 h1M227 333.5 h1M229 332.5 h1M231 331.5 h1M233 330.5 h1M235 329.5 h1M237 328.5 h1M239 327.5 h1M241 327.5 h1M243 326.5 h1M245 325.5 h1M247 324.5 h1M249 323.5 h1M251 322.5 h1M253 321.5 h1M255 320.5 h1M257 319.5 h1M259 318.5 h1M261 317.5 h1M263 316.5 h1M265 315.5 h1M267 314.5 h1M269 313.5 h1M271 312.5 h1M273 311.5 h1M275 310.5 h1M277 309.5 h1M279 308.5 h1M281 308.5 h1M283 307.5 h1M285 306.5 h1M287 305.5 h1M289 304.5 h1M291 303.5 h1M293 302.5 h1M295 301.5 h1M297 300.5 h1M299 299.5 h1"/>
<path stroke="#fff" d="M16 280.5 h8M24 281.5 h14M38 282.5 h15M53 283.5 h8"/>
<path stroke="#fff" d="M154 469.5 h1M155 468.5 h1M156.5 466 v2M157 465.5 h1M158 464.5 h1M159 463.5 h1M160 462.5 h1M161.5 460 v2M162 459.5 h1M163 458.5 h1M164 457.5 h1M165.5 455 v2M166 454.5 h1M167 453.5 h1M168 452.5 h1M169 451.5 h1M170.5 449 v2M171 448.5 h1M172 447.5 h1"/>
<path stroke="#808080" d="M174 445.5 h1M176 443.5 h1M177 441.5 h1M179 439.5 h1M181 437.5 h1M182 435.5 h1M184 433.5 h1M186 431.5 h1M188 429.5 h1M189 427.5 h1M191 425.5 h1M193 423.5 h1M194 421.5 h1M196 419.5 h1M198 417.5 h1M200 415.5 h1M201 413.5 h1M203 411.5 h1M205 409.5 h1M206 407.5 h1M208 405.5 h1M210 403.5 h1M212 401.5 h1M213 399.5 h1M215 397.5 h1M217 395.5 h1M218 393.5 h1M220 391.5 h1M222 389.5 h1M224 387.5 h1M225 385.5 h1M227 383.5 h1M229 381.5 h1M230 379.5 h1M232 377.5 h1M234 375.5 h1M236 373.5 h1M237 371.5 h1M239 369.5 h1M241 367.5 h1M242 365.5 h1M244 363.5 h1M246 361.5 h1M248 359.5 h1M249 357.5 h1M251 355.5 h1M253 353.5 h1M254 351.5 h1M256 349.5 h1M258 347.5 h1M260 345.5 h1M261 343.5 h1M263 341.5 h1M265 339.5 h1M266 337.5 h1M268 335.5 h1M270 333.5 h1M272 331.5 h1M273 329.5 h1M275 327.5 h1M277 325.5 h1M278 323.5 h1M280 321.5 h1M282 319.5 h1M284 317.5 h1M285 315.5 h1M287 313.5 h1M289 311.5 h1M290 309.5 h1M292 307.5 h1M294 305.5 h1M296 303.5 h1M297 301.5 h1M299 299.5 h1"/>
<path stroke="#fff" d="M83 404.5 h2M81 405.5 h2M79 406.5 h2M77 407.5 h2M75 408.5 h2M73 409.5 h2M71 410.5 h2M69 411.5 h2M67 412.5 h2M65 413.5 h2M63 414.5 h2M61 415.5 h2M59 416.5 h2M57 417.5 h2M55 418.5 h2M53 419.5 h2M51 420.5 h2M49 421.5 h2M47 422.5 h2M45 423.5 h2"/>
<path stroke="#fff" d="M243.5 513 v3M244.5 509 v4M245.5 505 v4M246.5 501 v4M247.5 497 v4M248.5 493 v4M249.5 489 v4M250.5 487 v2"/>
<path stroke="#fff" d="M141 534.5 h1M142.5 532 v2M143 531.5 h1M144.5 529 v2M145 528.5 h1M146.5 526 v2M147 525.5 h1M148.5 523 v2M149 522.5 h1M150.5 520 v2M151 519.5 h1M152.5 517 v2M153 516.5 h1M154.5 514 v2M155 513.5 h1M156.5 511 v2M157 510.5 h1M158.5 508 v2M159 507.5 h1M160.5 505 v2M161 504.5 h1M162.5 502 v2M163 501.5 h1M164.5 499 v2M165 498.5 h1"/>
<path stroke="#fff" d="M353.5 486 v2M354.5 488 v4M355.5 492 v3M356.5 495 v4M357.5 499 v3M358.5 502 v4M359.5 506 v3M360.5 509 v4M361.5 513 v2"/>
<path stroke="#808080" d="M299 299.5 h1M300 301.5 h1M300 303.5 h1M301 305.5 h1M301 307.5 h1M302 309.5 h1M302 311.5 h1M303 313.5 h1M304 315.5 h1M304 317.5 h1M305 319.5 h1M305 321.5 h1M306 323.5 h1M307 325.5 h1M307 327.5 h1M308 329.5 h1M308 331.5 h1M309 333.5 h1M309 335.5 h1M310 337.5 h1M311 339.5 h1M311 341.5 h1M312 343.5 h1M312 345.5 h1M313 347.5 h1M314 349.5 h1M314 351.5 h1M315 353.5 h1M315 355.5 h1M316 357.5 h1M316 359.5 h1M317 361.5 h1M318 363.5 h1M318 365.5 h1M319 367.5 h1M319 369.5 h1M320 371.5 h1M320 373.5 h1M321 375.5 h1M322 377.5 h1M322 379.5 h1M323 381.5 h1M323 383.5 h1M324 385.5 h1M325 387.5 h1M325 389.5 h1M326 391.5 h1M326 393.5 h1M327 395.5 h1M327 397.5 h1M328 399.5 h1M329 401.5 h1M329 403.5 h1M330 405.5 h1M330 407.5 h1M331 409.5 h1M332 411.5 h1M332 413.5 h1M333 415.5 h1M333 417.5 h1M334 419.5 h1M334 421.5 h1M335 423.5 h1M336 425.5 h1M336 427.5 h1M337 429.5 h1M337 431.5 h1M338 433.5 h1M338 435.5 h1M339 437.5 h1M340 439.5 h1M340 441.5 h1M341 443.5 h1M341 445.5 h1M342 447.5 h1M343 449.5 h1M343 451.5 h1M344 453.5 h1M344 455.5 h1M345 457.5 h1M345 459.5 h1M346 461.5 h1M347 463.5 h1M347 465.5 h1M348 467.5 h1M348 469.5 h1M349 471.5 h1M350 473.5 h1M350 475.5 h1M351 477.5 h1M351 479.5 h1M352 481.5 h1M352 483.5 h1M353 485.5 h1"/>
<path stroke="#fff" d="M280.5 575 v8M281.5 560 v15M282.5 546 v14M283.5 538 v8"/>
<path stroke="#fff" d="M456 418.5 h2M460 421.5 h2M465 425.5 h2M470 429.5 h2M474 432.5 h2M454 416.5 h1M455 417.5 h1M458 419.5 h1M459 420.5 h1M462 422.5 h1M463 423.5 h1M464 424.5 h1M467 426.5 h1M468 427.5 h1M469 428.5 h1M472 430.5 h1M473 431.5 h1M476 433.5 h1M477 434.5 h1"/>
<path stroke="#808080" d="M299 299.5 h1M301 301.5 h1M303 302.5 h1M305 304.5 h1M307 305.5 h1M309 307.5 h1M311 308.5 h1M313 310.5 h1M315 311.5 h1M317 313.5 h1M319 314.5 h1M321 316.5 h1M323 317.5 h1M325 319.5 h1M327 320.5 h1M329 322.5 h1M331 323.5 h1M333 325.5 h1M335 326.5 h1M337 328.5 h1M339 329.5 h1M341 331.5 h1M343 332.5 h1M345 334.5 h1M347 335.5 h1M349 337.5 h1M351 339.5 h1M353 340.5 h1M355 342.5 h1M357 343.5 h1M359 345.5 h1M361 346.5 h1M363 348.5 h1M365 349.5 h1M367 351.5 h1M369 352.5 h1M371 354.5 h1M373 355.5 h1M375 357.5 h1M377 358.5 h1M379 360.5 h1M381 361.5 h1M383 363.5 h1M385 364.5 h1M387 366.5 h1M389 367.5 h1M391 369.5 h1M393 370.5 h1M395 372.5 h1M397 373.5 h1M399 375.5 h1M401 376.5 h1M403 378.5 h1M405 380.5 h1M407 381.5 h1M409 383.5 h1M411 384.5 h1M413 386.5 h1M415 387.5 h1M417 389.5 h1M419 390.5 h1M421 392.5 h1M423 393.5 h1M425 395.5 h1M427 396.5 h1M429 398.5 h1M431 399.5 h1M433 401.5 h1M435 402.5 h1M437 404.5 h1M439 405.5 h1M441 407.5 h1M443 408.5 h1M445 410.5 h1M447 411.5 h1M449 413.5 h1M451 414.5 h1M453 416.5 h1"/>
<path stroke="#fff" d="M404.5 514 v2M405.5 516 v2M406.5 518 v2M407.5 520 v2M408.5 522 v2M409.5 524 v2M410.5 526 v2M411.5 528 v2M412.5 530 v2M413.5 532 v2M414.5 534 v2M415.5 536 v2M416.5 538 v2M417.5 540 v2M418.5 542 v2M419.5 544 v2M420.5 546 v2M421.5 548 v2M422.5 550 v2M423.5 552 v2"/>
<path stroke="#fff" d="M494 299.5 h30"/>
<path stroke="#fff" d="M499 434.5 h2M502 436.5 h2M505 438.5 h2M508 440.5 h2M511 442.5 h2M514 444.5 h2M517 446.5 h2M520 448.5 h2M523 450.5 h2M526 452.5 h2M529 454.5 h2M532 456.5 h2M498 433.5 h1M501 435.5 h1M504 437.5 h1M507 439.5 h1M510 441.5 h1M513 443.5 h1M516 445.5 h1M519 447.5 h1M522 449.5 h1M525 451.5 h1M528 453.5 h1M531 455.5 h1M534 457.5 h1"/>
<path stroke="#fff" d="M500 203.5 h2M498 204.5 h2M496 205.5 h2M494 206.5 h2M492 207.5 h2M490 208.5 h2M487 209.5 h3M485 210.5 h2M483 211.5 h2M481 212.5 h2M479 213.5 h2M477 214.5 h2M475 215.5 h2"/>
<path stroke="#808080" d="M299 299.5 h1M301 298.5 h1M303 297.5 h1M305 296.5 h1M307 295.5 h1M309 294.5 h1M311 293.5 h1M313 292.5 h1M315 291.5 h1M317 290.5 h1M319 290.5 h1M321 289.5 h1M323 288.5 h1M325 287.5 h1M327 286.5 h1M329 285.5 h1M331 284.5 h1M333 283.5 h1M335 282.5 h1M337 281.5 h1M339 280.5 h1M341 279.5 h1M343 278.5 h1M345 277.5 h1M347 276.5 h1M349 275.5 h1M351 274.5 h1M353 273.5 h1M355 272.5 h1M357 271.5 h1M359 271.5 h1M361 270.5 h1M363 269.5 h1M365 268.5 h1M367 267.5 h1M369 266.5 h1M371 265.5 h1M373 264.5 h1M375 263.5 h1M377 262.5 h1M379 261.5 h1M381 260.5 h1M383 259.5 h1M385 258.5 h1M387 257.5 h1M389 256.5 h1M391 255.5 h1M393 254.5 h1M395 253.5 h1M397 253.5 h1M399 252.5 h1M401 251.5 h1M403 250.5 h1M405 249.5 h1M407 248.5 h1M409 247.5 h1M411 246.5 h1M413 245.5 h1M415 244.5 h1M417 243.5 h1M419 242.5 h1M421 241.5 h1M423 240.5 h1M425 239.5 h1M427 238.5 h1M429 237.5 h1M431 236.5 h1M433 235.5 h1M435 234.5 h1M437 234.5 h1M439 233.5 h1M441 232.5 h1M443 231.5 h1M445 230.5 h1M447 229.5 h1M449 228.5 h1M451 227.5 h1M453 226.5 h1M455 225.5 h1M457 224.5 h1M459 223.5 h1M461 222.5 h1M463 221.5 h1M465 220.5 h1M467 219.5 h1M469 218.5 h1M471 217.5 h1M473 216.5 h1"/>
<path stroke="#fff" d="M538 315.5 h8M546 316.5 h14M560 317.5 h15M575 318.5 h8"/>
<path stroke="#fff" d="M426 151.5 h1M427 150.5 h1M428.5 148 v2M429 147.5 h1M430 146.5 h1M431 145.5 h1M432 144.5 h1M433.5 142 v2M434 141.5 h1M435 140.5 h1M436 139.5 h1M437.5 137 v2M438 136.5 h1M439 135.5 h1M440 134.5 h1M441 133.5 h1M442.5 131 v2M443 130.5 h1M444 129.5 h1"/>
<path stroke="#808080" d="M299 299.5 h1M301 297.5 h1M302 295.5 h1M304 293.5 h1M306 291.5 h1M308 289.5 h1M309 287.5 h1M311 285.5 h1M313 283.5 h1M314 281.5 h1M316 279.5 h1M318 277.5 h1M320 275.5 h1M321 273.5 h1M323 271.5 h1M325 269.5 h1M326 267.5 h1M328 265.5 h1M330 263.5 h1M332 261.5 h1M333 259.5 h1M335 257.5 h1M337 255.5 h1M338 253.5 h1M340 251.5 h1M342 249.5 h1M344 247.5 h1M345 245.5 h1M347 243.5 h1M349 241.5 h1M350 239.5 h1M352 237.5 h1M354 235.5 h1M356 233.5 h1M357 231.5 h1M359 229.5 h1M361 227.5 h1M362 225.5 h1M364 223.5 h1M366 221.5 h1M368 219.5 h1M369 217.5 h1M371 215.5 h1M373 213.5 h1M374 211.5 h1M376 209.5 h1M378 207.5 h1M380 205.5 h1M381 203.5 h1M383 201.5 h1M385 199.5 h1M386 197.5 h1M388 195.5 h1M390 193.5 h1M392 191.5 h1M393 189.5 h1M395 187.5 h1M397 185.5 h1M398 183.5 h1M400 181.5 h1M402 179.5 h1M404 177.5 h1M405 175.5 h1M407 173.5 h1M409 171.5 h1M410 169.5 h1M412 167.5 h1M414 165.5 h1M416 163.5 h1M417 161.5 h1M419 159.5 h1M421 157.5 h1M422 155.5 h1M424 153.5 h1"/>
<path stroke="#fff" d="M552 175.5 h2M550 176.5 h2M548 177.5 h2M546 178.5 h2M544 179.5 h2M542 180.5 h2M540 181.5 h2M538 182.5 h2M536 183.5 h2M534 184.5 h2M532 185.5 h2M530 186.5 h2M528 187.5 h2M526 188.5 h2M524 189.5 h2M522 190.5 h2M520 191.5 h2M518 192.5 h2M516 193.5 h2M514 194.5 h2"/>
<path stroke="#fff" d="M348.5 109 v3M349.5 105 v4M350.5 101 v4M351.5 97 v4M352.5 93 v4M353.5 89 v4M354.5 85 v4M355.5 83 v2"/>
<path stroke="#fff" d="M433 100.5 h1M434.5 98 v2M435 97.5 h1M436.5 95 v2M437 94.5 h1M438.5 92 v2M439 91.5 h1M440.5 89 v2M441 88.5 h1M442.5 86 v2M443 85.5 h1M444.5 83 v2M445 82.5 h1M446.5 80 v2M447 79.5 h1M448.5 77 v2M449 76.5 h1M450.5 74 v2M451 73.5 h1M452.5 71 v2M453 70.5 h1M454.5 68 v2M455 67.5 h1M456.5 65 v2M457 64.5 h1"/>
<path stroke="#fff" d="M237.5 84 v2M238.5 86 v4M239.5 90 v3M240.5 93 v4M241.5 97 v3M242.5 100 v4M243.5 104 v3M244.5 107 v4M245.5 111 v2"/>
<path stroke="#808080" d="M245 113.5 h1M246 115.5 h1M246 117.5 h1M247 119.5 h1M247 121.5 h1M248 123.5 h1M248 125.5 h1M249 127.5 h1M250 129.5 h1M250 131.5 h1M251 133.5 h1M251 135.5 h1M252 137.5 h1M253 139.5 h1M253 141.5 h1M254 143.5 h1M254 145.5 h1M255 147.5 h1M255 149.5 h1M256 151.5 h1M257 153.5 h1M257 155.5 h1M258 157.5 h1M258 159.5 h1M259 161.5 h1M260 163.5 h1M260 165.5 h1M261 167.5 h1M261 169.5 h1M262 171.5 h1M262 173.5 h1M263 175.5 h1M264 177.5 h1M264 179.5 h1M265 181.5 h1M265 183.5 h1M266 185.5 h1M266 187.5 h1M267 189.5 h1M268 191.5 h1M268 193.5 h1M269 195.5 h1M269 197.5 h1M270 199.5 h1M271 201.5 h1M271 203.5 h1M272 205.5 h1M272 207.5 h1M273 209.5 h1M273 211.5 h1M274 213.5 h1M275 215.5 h1M275 217.5 h1M276 219.5 h1M276 221.5 h1M277 223.5 h1M278 225.5 h1M278 227.5 h1M279 229.5 h1M279 231.5 h1M280 233.5 h1M280 235.5 h1M281 237.5 h1M282 239.5 h1M282 241.5 h1M283 243.5 h1M283 245.5 h1M284 247.5 h1M284 249.5 h1M285 251.5 h1M286 253.5 h1M286 255.5 h1M287 257.5 h1M287 259.5 h1M288 261.5 h1M289 263.5 h1M289 265.5 h1M290 267.5 h1M290 269.5 h1M291 271.5 h1M291 273.5 h1M292 275.5 h1M293 277.5 h1M293 279.5 h1M294 281.5 h1M294 283.5 h1M295 285.5 h1M296 287.5 h1M296 289.5 h1M297 291.5 h1M297 293.5 h1M298 295.5 h1M298 297.5 h1M299 299.5 h1"/>
<path stroke="#fff" d="M315.5 53 v8M316.5 38 v15M317.5 24 v14M318.5 16 v8"/>
<path stroke="#fff" d="M123 166.5 h2M127 169.5 h2M132 173.5 h2M137 177.5 h2M141 180.5 h2M121 164.5 h1M122 165.5 h1M125 167.5 h1M126 168.5 h1M129 170.5 h1M130 171.5 h1M131 172.5 h1M134 174.5 h1M135 175.5 h1M136 176.5 h1M139 178.5 h1M140 179.5 h1M143 181.5 h1M144 182.5 h1"/>
<path stroke="#808080" d="M145 182.5 h1M147 184.5 h1M149 185.5 h1M151 187.5 h1M153 188.5 h1M155 190.5 h1M157 191.5 h1M159 193.5 h1M161 194.5 h1M163 196.5 h1M165 197.5 h1M167 199.5 h1M169 200.5 h1M171 202.5 h1M173 203.5 h1M175 205.5 h1M177 206.5 h1M179 208.5 h1M181 209.5 h1M183 211.5 h1M185 212.5 h1M187 214.5 h1M189 215.5 h1M191 217.5 h1M193 218.5 h1M195 220.5 h1M197 222.5 h1M199 223.5 h1M201 225.5 h1M203 226.5 h1M205 228.5 h1M207 229.5 h1M209 231.5 h1M211 232.5 h1M213 234.5 h1M215 235.5 h1M217 237.5 h1M219 238.5 h1M221 240.5 h1M223 241.5 h1M225 243.5 h1M227 244.5 h1M229 246.5 h1M231 247.5 h1M233 249.5 h1M235 250.5 h1M237 252.5 h1M239 253.5 h1M241 255.5 h1M243 256.5 h1M245 258.5 h1M247 259.5 h1M249 261.5 h1M251 263.5 h1M253 264.5 h1M255 266.5 h1M257 267.5 h1M259 269.5 h1M261 270.5 h1M263 272.5 h1M265 273.5 h1M267 275.5 h1M269 276.5 h1M271 278.5 h1M273 279.5 h1M275 281.5 h1M277 282.5 h1M279 284.5 h1M281 285.5 h1M283 287.5 h1M285 288.5 h1M287 290.5 h1M289 291.5 h1M291 293.5 h1M293 294.5 h1M295 296.5 h1M297 297.5 h1M299 299.5 h1"/>
</g>
<g id="signs">
<path class="sign" stroke="#f00" d="M121 93.5 h3M131 93.5 h3M119.5 95 v3M120 94.5 h1M120 98.5 h1M121 99.5 h1M124 94.5 h1M125.5 95 v3M126.5 98 v4M127.5 102 v8M128.5 98 v4M129.5 95 v3M130 94.5 h1M133 99.5 h1M134 94.5 h1M134 98.5 h1M135.5 95 v3"/>
<path class="sign" stroke="#ff0" d="M47 209.5 h2M54 209.5 h2M49 210.5 h5M47 211.5 h2M54 211.5 h2M47 221.5 h2M54 221.5 h2M49 222.5 h5M45 206.5 h1M45.5 214 v5M46.5 207 v2M46.5 212 v2M46.5 219 v2M56.5 207 v2M56.5 212 v2M56.5 219 v2M57 206.5 h1M57.5 214 v5"/>
<path class="sign" stroke="#0f0" d="M38 343.5 h11M38 355.5 h11M36 341.5 h1M36 357.5 h1M37 342.5 h1M37 356.5 h1M40.5 344 v11M46.5 344 v11M49 342.5 h1M49 356.5 h1M50 341.5 h1M50 357.5 h1"/>
<path class="sign" stroke="#00f" d="M99 464.5 h5M96 465.5 h3M105 466.5 h3M95 470.5 h3M105 472.5 h3M95 476.5 h3M104 477.5 h3M99 478.5 h5M93 468.5 h1M93.5 472 v3M94 467.5 h1M94 471.5 h1M94 475.5 h1M95 466.5 h1M98 471.5 h1M98 475.5 h1M98 477.5 h1M99.5 472 v3M103.5 468 v3M104 465.5 h1M104 467.5 h1M104 471.5 h1M107 476.5 h1M108 467.5 h1M108 471.5 h1M108 475.5 h1M109.5 468 v3M109 474.5 h1"/>
<path class="sign" stroke="#f00" d="M212 539.5 h5M206 551.5 h1M207 552.5 h1M208.5 543 v5M208 553.5 h1M209 542.5 h1M209 548.5 h1M209 552.5 h1M210 541.5 h1M210.5 549 v3M211 540.5 h1M217 540.5 h1M218 541.5 h1M218.5 549 v3M219 542.5 h1M219 548.5 h1M219 552.5 h1M220.5 543 v5M220 553.5 h1M221 554.5 h1M222 555.5 h1"/>
<path class="sign" stroke="#ff0" d="M354 551.5 h2M351 553.5 h2M341 548.5 h1M342 549.5 h1M343.5 550 v13M344 549.5 h1M345 548.5 h1M346 549.5 h1M347.5 550 v13M348 549.5 h1M349 548.5 h1M350 549.5 h1M351.5 550 v3M351.5 554 v7M351 564.5 h1M352 561.5 h1M352 563.5 h1M353 552.5 h1M353 562.5 h1M354 561.5 h1M354 563.5 h1M355 550.5 h1M355.5 552 v9M355 564.5 h1"/>
<path class="sign" stroke="#0f0" d="M469 493.5 h5M463 499.5 h7M473 499.5 h7M463 503.5 h17M467.5 495 v3M468 494.5 h1M468 498.5 h1M474 494.5 h1M474 498.5 h1M475.5 495 v3"/>
<path class="sign" stroke="#00f" d="M553 388.5 h3M551 392.5 h2M539 376.5 h1M540 377.5 h1M541.5 378 v13M542 377.5 h1M543 376.5 h1M544 377.5 h1M545.5 378 v13M546 377.5 h1M547 376.5 h1M548 377.5 h1M549.5 378 v13M550 391.5 h1M553 391.5 h1M554 387.5 h1M554.5 389 v2"/>
<path class="sign" stroke="#f00" d="M560 241.5 h5M563 242.5 h2M548 257.5 h1M549 256.5 h1M550 247.5 h1M550 255.5 h1M551 248.5 h1M551 254.5 h1M552 249.5 h1M552 253.5 h1M553 250.5 h1M553 252.5 h1M554 251.5 h1M555 250.5 h1M555 252.5 h1M556 249.5 h1M556 253.5 h1M557 248.5 h1M557 254.5 h1M558 247.5 h1M558 255.5 h1M559 246.5 h1M560 245.5 h1M561 244.5 h1M562 243.5 h1M564.5 243 v3"/>
<path class="sign" stroke="#ff0" d="M501 119.5 h3M490 120.5 h2M497 120.5 h2M501 125.5 h3M489 121.5 h1M491 119.5 h1M491.5 121 v7M492 128.5 h1M493.5 129 v5M494 128.5 h1M495.5 123 v5M496 122.5 h1M497 119.5 h1M497 121.5 h1M498 122.5 h1M499 121.5 h1M499 123.5 h1M500 120.5 h1M500 124.5 h1M502 126.5 h1M503 127.5 h1M503 135.5 h1M504 120.5 h1M504 124.5 h1M504 128.5 h1M504 134.5 h1M505.5 121 v3M505.5 129 v5"/>
<path class="sign" stroke="#0f0" d="M379 44.5 h2M385 44.5 h2M382 48.5 h2M388 48.5 h2M379 54.5 h2M385 54.5 h2M382 58.5 h2M388 58.5 h2M376 49.5 h1M376 59.5 h1M377.5 47 v2M377.5 57 v2M378 46.5 h1M378 56.5 h1M379 45.5 h1M379 55.5 h1M380 43.5 h1M380 53.5 h1M381.5 45 v3M381.5 55 v3M382 49.5 h1M382 59.5 h1M383 47.5 h1M383 57.5 h1M384 46.5 h1M384 56.5 h1M385 45.5 h1M385 55.5 h1M386 43.5 h1M386 53.5 h1M387.5 45 v3M387.5 55 v3M388 49.5 h1M388 59.5 h1M389 47.5 h1M389 57.5 h1M390 46.5 h1M390 56.5 h1M391.5 44 v2M391.5 54 v2M392 43.5 h1M392 53.5 h1"/>
<path class="sign" stroke="#00f" d="M241 42.5 h17M241 34.5 h1M241 50.5 h1M242 35.5 h1M242 49.5 h1M243 36.5 h1M243 48.5 h1M244.5 37 v2M244.5 46 v2M245.5 39 v3M245.5 43 v3M253.5 39 v3M253.5 43 v3M254.5 37 v2M254.5 46 v2M255 36.5 h1M255 48.5 h1M256 35.5 h1M256 49.5 h1M257 34.5 h1M257 50.5 h1"/>
</g>
<g id="house-numbers">
<g font-family="Liberation Sans, sans-serif" font-size="12.6" text-anchor="middle" style="will-change:transform">
<text x="94.5" y="350" fill="#f00" textLength="5.8" lengthAdjust="spacingAndGlyphs">1</text>
<text x="133.5" y="431" fill="#ff0" textLength="5.8" lengthAdjust="spacingAndGlyphs">2</text>
<text x="202.5" y="490" fill="#0f0" textLength="5.8" lengthAdjust="spacingAndGlyphs">3</text>
<text x="301.5" y="514" fill="#00f" textLength="5.8" lengthAdjust="spacingAndGlyphs">4</text>
<text x="418.5" y="477" fill="#f00" textLength="5.8" lengthAdjust="spacingAndGlyphs">5</text>
<text x="498.5" y="370" fill="#ff0" textLength="5.8" lengthAdjust="spacingAndGlyphs">6</text>
<text x="504.5" y="258" fill="#0f0" textLength="5.8" lengthAdjust="spacingAndGlyphs">7</text>
<text x="465.5" y="177" fill="#00f" textLength="5.8" lengthAdjust="spacingAndGlyphs">8</text>
<text x="396.5" y="118" fill="#f00" textLength="5.8" lengthAdjust="spacingAndGlyphs">9</text>
<text transform="translate(297.5,94) scale(0.8277,1)" x="-4.832 4.832" y="0" fill="#ff0">10</text>
<text transform="translate(180.5,131) scale(0.8277,1)" x="-4.832 4.832" y="0" fill="#0f0">11</text>
<text transform="translate(100.5,238) scale(0.8277,1)" x="-4.832 4.832" y="0" fill="#00f">12</text>
</g>
</g>
<g id="planets">
<path class="pointer" stroke="#fff" d="M262 136.5 h1M263.5 137 v2M264 139.5 h1M265 140.5 h1M266.5 141 v2M267 143.5 h1M268.5 144 v2M269 146.5 h1"/>
<path class="planet" stroke="#f00" d="M257 116.5 h5M255 117.5 h2M262 117.5 h2M255 131.5 h2M262 131.5 h2M257 132.5 h5M251.5 122 v5M252.5 120 v2M252.5 127 v2M253 119.5 h1M253 129.5 h1M254 118.5 h1M254 130.5 h1M259 124.5 h1M264 118.5 h1M264 130.5 h1M265 119.5 h1M265 129.5 h1M266.5 120 v2M266.5 127 v2M267.5 122 v5"/>
<path class="dot" stroke="#f00" d="M270 152.5 h1"/>
<path class="pointer" stroke="#fff" d="M327.5 134 v3M328.5 137 v4M329.5 141 v4M330.5 145 v3"/>
<path class="planet" stroke="#00f" d="M325 114.5 h5M330 115.5 h2M330 129.5 h2M325 130.5 h5M323 116.5 h1M323 128.5 h1M324 115.5 h1M324 117.5 h1M324 127.5 h1M324 129.5 h1M325 118.5 h1M325 126.5 h1M326.5 119 v2M326.5 124 v2M327.5 121 v3M332 116.5 h1M332 128.5 h1M333 117.5 h1M333 127.5 h1M334.5 118 v2M334.5 125 v2M335.5 120 v5"/>
<path class="dot" stroke="#00f" d="M329 152.5 h1"/>
<path class="pointer" stroke="#fff" d="M308.5 138 v7M309.5 132 v6"/>
<path class="planet" stroke="#0f0" d="M308 114.5 h5M308 122.5 h5M306 126.5 h9M306 112.5 h1M306.5 116 v5M307 113.5 h1M307 115.5 h1M307 121.5 h1M310.5 123 v3M310.5 127 v2M313 113.5 h1M313 115.5 h1M313 121.5 h1M314 112.5 h1M314.5 116 v5"/>
<path class="dot" stroke="#0f0" d="M308 150.5 h1"/>
<path class="pointer" stroke="#fff" d="M239.5 142 v2M240.5 144 v2M241.5 146 v2M242.5 148 v3M243.5 151 v2M244.5 153 v2"/>
<path class="planet" stroke="#0f0" d="M233 123.5 h5M233 131.5 h5M231 135.5 h9M231.5 125 v5M232 124.5 h1M232 130.5 h1M235.5 132 v3M235.5 136 v4M238 124.5 h1M238 130.5 h1M239.5 125 v5"/>
<path class="dot" stroke="#0f0" d="M246 159.5 h1"/>
<path class="pointer" stroke="#fff" d="M162 205.5 h2M166 208.5 h2M169 210.5 h2M161 204.5 h1M164 206.5 h1M165 207.5 h1M168 209.5 h1M171 211.5 h1"/>
<path class="planet" stroke="#f00" d="M154 189.5 h6M158 190.5 h2M146 195.5 h5M151 196.5 h2M146 205.5 h5M143.5 198 v5M144 197.5 h1M144 203.5 h1M145 196.5 h1M145 204.5 h1M151 204.5 h1M152 197.5 h1M152 203.5 h1M153 195.5 h1M153.5 198 v5M154 194.5 h1M155 193.5 h1M156 192.5 h1M157 191.5 h1M159.5 191 v4"/>
<path class="dot" stroke="#f00" d="M176 214.5 h1"/>
<path class="pointer" stroke="#808080" d="M436 373.5 h2M438 374.5 h2M440 375.5 h2M442 376.5 h2M444 377.5 h2M446 378.5 h2"/>
<path class="planet" stroke="#f00" d="M452 378.5 h2M451 390.5 h15M451 389.5 h1M452.5 387 v2M453.5 385 v2M454 379.5 h1M454.5 383 v2M455.5 380 v3M461.5 378 v12M461.5 391 v2M462 377.5 h1M463 376.5 h1"/>
<path class="dot" stroke="#f00" d="M431 370.5 h1"/>
<path class="pointer" stroke="#fff" d="M153 220.5 h2M155 221.5 h2M158 223.5 h2M160 224.5 h2M152 219.5 h1M157 222.5 h1M162 225.5 h1"/>
<path class="planet" stroke="#ff0" d="M135 207.5 h9M143 211.5 h3M139 213.5 h3M139.5 205 v2M139.5 208 v5M139.5 214 v6M142 212.5 h1M145.5 217 v3M146 212.5 h1M146 216.5 h1M146 220.5 h1M147.5 213 v3M147 221.5 h1"/>
<path class="dot" stroke="#ff0" d="M168 227.5 h1"/>
<path class="pointer" stroke="#808080" d="M385 428.5 h1M386.5 429 v2M387 431.5 h1M388 432.5 h1M389.5 433 v2M390 435.5 h1M391.5 436 v2M392 438.5 h1"/>
<path class="planet" stroke="#0f0" d="M395 446.5 h9M398 452.5 h3M398 456.5 h3M393 440.5 h1M393 450.5 h1M394 441.5 h1M394 449.5 h1M395.5 442 v4M395.5 447 v2M397.5 453 v3M399.5 444 v2M399.5 447 v5M401.5 453 v3M403.5 442 v4M403.5 447 v2M404 441.5 h1M404 449.5 h1M405 440.5 h1M405 450.5 h1"/>
<path class="dot" stroke="#0f0" d="M382 423.5 h1"/>
<path class="pointer" stroke="#808080" d="M454 307.5 h6M460 308.5 h7"/>
<path class="planet" stroke="#00f" d="M471 302.5 h3M476 302.5 h5M483 302.5 h3M474 307.5 h2M481 307.5 h2M476 308.5 h5M474 312.5 h9M472.5 300 v2M472.5 303 v2M473.5 305 v2M478.5 300 v2M478.5 303 v5M478.5 309 v3M478.5 313 v4M483.5 305 v2M484.5 300 v2M484.5 303 v2"/>
<path class="dot" stroke="#00f" d="M448 307.5 h1"/>
<path class="pointer" stroke="#808080" d="M358.5 443 v2M359.5 445 v2M360.5 447 v2M361.5 449 v2M362.5 451 v2M363.5 453 v2"/>
<path class="planet" stroke="#00f" d="M366 457.5 h3M366 461.5 h3M363 464.5 h2M370 464.5 h2M365 465.5 h5M363 469.5 h9M361.5 457 v5M362.5 462 v2M365.5 458 v3M367.5 466 v3M367.5 470 v4M369.5 458 v3M372.5 462 v2M373.5 457 v5"/>
<path class="dot" stroke="#00f" d="M356 437.5 h1"/>
<path class="pointer" stroke="#808080" d="M278.5 139 v7M279.5 133 v6"/>
<path class="planet" stroke="#008080" d="M276 113.5 h5M272 125.5 h3M282 125.5 h3M270 127.5 h1M271 126.5 h1M271 128.5 h1M272.5 117 v5M272 129.5 h1M273 116.5 h1M273 122.5 h1M273 128.5 h1M274 115.5 h1M274.5 123 v2M274.5 126 v2M275 114.5 h1M281 114.5 h1M282 115.5 h1M282.5 123 v2M282.5 126 v2M283 116.5 h1M283 122.5 h1M283 128.5 h1M284.5 117 v5M284 129.5 h1M285 126.5 h1M285 128.5 h1M286 127.5 h1"/>
<path class="dot" stroke="#008080" d="M279 151.5 h1"/>
<path class="pointer" stroke="#fff" d="M131 299.5 h13"/>
<text x="111" y="308" fill="#f00" stroke="#f00" stroke-width="0.4" font-size="23.3" font-family="DejaVu Sans Light, DejaVu Sans, Liberation Sans, sans-serif" textLength="17" lengthAdjust="spacingAndGlyphs" style="will-change:transform;stroke:#f00">Asc</text>
<path class="dot" stroke="#f00" d="M149 299.5 h1"/>
<path class="pointer" stroke="#fff" d="M338 148.5 h1M339.5 146 v2M340.5 144 v2M341 143.5 h1M342.5 141 v2M343.5 139 v2M344 138.5 h1"/>
<text x="338" y="135" fill="#ff0" stroke="#ff0" stroke-width="0.4" font-size="23.3" font-family="DejaVu Sans Light, DejaVu Sans, Liberation Sans, sans-serif" textLength="18" lengthAdjust="spacingAndGlyphs" style="will-change:transform;stroke:#ff0">MC</text>
<path class="dot" stroke="#ff0" d="M337 154.5 h1"/>
</g>
<g id="aspects">
<path class="aspect" stroke="#ff0" d="M328 158.5 h1M330 159.5 h1M332 159.5 h1M334 160.5 h1"/>
<path class="aspect" stroke="#0f0" d="M155 299.5 h1M157 300.5 h1M159 301.5 h1M161 302.5 h1M163 303.5 h1M165 304.5 h1M167 305.5 h1M169 306.5 h1M171 308.5 h1M173 309.5 h1M175 310.5 h1M177 311.5 h1M179 312.5 h1M181 313.5 h1M183 314.5 h1M185 315.5 h1M187 316.5 h1M189 317.5 h1M191 318.5 h1M193 319.5 h1M195 320.5 h1M197 321.5 h1M199 322.5 h1M201 323.5 h1M203 325.5 h1M205 326.5 h1M207 327.5 h1M209 328.5 h1M211 329.5 h1M213 330.5 h1M215 331.5 h1M217 332.5 h1M219 333.5 h1M221 334.5 h1M223 335.5 h1M225 336.5 h1M227 337.5 h1M229 338.5 h1M231 339.5 h1M233 340.5 h1M235 342.5 h1M237 343.5 h1M239 344.5 h1M241 345.5 h1M243 346.5 h1M245 347.5 h1M247 348.5 h1M249 349.5 h1M251 350.5 h1M253 351.5 h1M255 352.5 h1M257 353.5 h1M259 354.5 h1M261 355.5 h1M263 356.5 h1M265 357.5 h1M267 359.5 h1M269 360.5 h1M271 361.5 h1M273 362.5 h1M275 363.5 h1M277 364.5 h1M279 365.5 h1M281 366.5 h1M283 367.5 h1M285 368.5 h1M287 369.5 h1M289 370.5 h1M291 371.5 h1M293 372.5 h1M295 373.5 h1M297 374.5 h1M299 376.5 h1M301 377.5 h1M303 378.5 h1M305 379.5 h1M307 380.5 h1M309 381.5 h1M311 382.5 h1M313 383.5 h1M315 384.5 h1M317 385.5 h1M319 386.5 h1M321 387.5 h1M323 388.5 h1M325 389.5 h1M327 390.5 h1M329 391.5 h1M331 393.5 h1M333 394.5 h1M335 395.5 h1M337 396.5 h1M339 397.5 h1M341 398.5 h1M343 399.5 h1M345 400.5 h1M347 401.5 h1M349 402.5 h1M351 403.5 h1M353 404.5 h1M355 405.5 h1M357 406.5 h1M359 407.5 h1M361 408.5 h1M363 410.5 h1M365 411.5 h1M367 412.5 h1M369 413.5 h1M371 414.5 h1M373 415.5 h1M375 416.5 h1M377 417.5 h1M379 418.5 h1"/>
<path class="aspect" stroke="#f00" d="M155 299.5 h1M157 297.5 h1M159 295.5 h1M161 293.5 h1M163 291.5 h1M165 290.5 h1M167 288.5 h1M169 286.5 h1M171 284.5 h1M173 282.5 h1M175 280.5 h1M177 278.5 h1M179 276.5 h1M181 275.5 h1M183 273.5 h1M185 271.5 h1M187 269.5 h1M189 267.5 h1M191 265.5 h1M193 263.5 h1M195 261.5 h1M197 259.5 h1M199 258.5 h1M201 256.5 h1M203 254.5 h1M205 252.5 h1M207 250.5 h1M209 248.5 h1M211 246.5 h1M213 244.5 h1M215 243.5 h1M217 241.5 h1M219 239.5 h1M221 237.5 h1M223 235.5 h1M225 233.5 h1M227 231.5 h1M229 229.5 h1M231 227.5 h1M233 226.5 h1M235 224.5 h1M237 222.5 h1M239 220.5 h1M241 218.5 h1M243 216.5 h1M245 214.5 h1M247 212.5 h1M249 211.5 h1M251 209.5 h1M253 207.5 h1M255 205.5 h1M257 203.5 h1M259 201.5 h1M261 199.5 h1M263 197.5 h1M265 196.5 h1M267 194.5 h1M269 192.5 h1M271 190.5 h1M273 188.5 h1M275 186.5 h1M277 184.5 h1M279 182.5 h1M281 180.5 h1M283 179.5 h1M285 177.5 h1M287 175.5 h1M289 173.5 h1M291 171.5 h1M293 169.5 h1M295 167.5 h1M297 165.5 h1M299 164.5 h1M301 162.5 h1M303 160.5 h1M305 158.5 h1M307 156.5 h1"/>
<path class="aspect" stroke="#0ff" d="M353 432.5 h1M355 429.5 h1M357 426.5 h1M359 423.5 h1M361 420.5 h1M364 417.5 h1M366 414.5 h1M368 411.5 h1M370 408.5 h1M372 405.5 h1M374 402.5 h1M376 399.5 h1M378 396.5 h1M381 393.5 h1M383 390.5 h1M385 387.5 h1M387 384.5 h1M389 381.5 h1M391 378.5 h1M393 375.5 h1M395 372.5 h1M397 369.5 h1M400 366.5 h1M402 363.5 h1M404 360.5 h1M406 357.5 h1M408 354.5 h1M410 351.5 h1M412 348.5 h1M414 345.5 h1M417 342.5 h1M419 339.5 h1M421 336.5 h1M423 333.5 h1M425 330.5 h1M427 327.5 h1M429 324.5 h1M431 321.5 h1M434 318.5 h1M436 315.5 h1M438 312.5 h1M440 309.5 h1M442 306.5 h1"/>
<path class="aspect" stroke="#00f" d="M248.5 165 v2M249.5 167 v2M250.5 169 v3M251.5 172 v2M252.5 174 v3M253.5 177 v2M254.5 179 v3M255.5 182 v3M256.5 185 v2M257.5 187 v3M258.5 190 v2M259.5 192 v3M260.5 195 v2M261.5 197 v3M262.5 200 v2M263.5 202 v3M264.5 205 v2M265.5 207 v3M266.5 210 v3M267.5 213 v2M268.5 215 v3M269.5 218 v2M270.5 220 v3M271.5 223 v2M272.5 225 v3M273.5 228 v2M274.5 230 v3M275.5 233 v2M276.5 235 v3M277.5 238 v3M278.5 241 v2M279.5 243 v3M280.5 246 v2M281.5 248 v3M282.5 251 v2M283.5 253 v3M284.5 256 v2M285.5 258 v3M286.5 261 v2M287.5 263 v3M288.5 266 v2M289.5 268 v3M290.5 271 v3M291.5 274 v2M292.5 276 v3M293.5 279 v2M294.5 281 v3M295.5 284 v2M296.5 286 v3M297.5 289 v2M298.5 291 v3M299.5 294 v2M300.5 296 v3M301.5 299 v3M302.5 302 v2M303.5 304 v3M304.5 307 v2M305.5 309 v3M306.5 312 v2M307.5 314 v3M308.5 317 v2M309.5 319 v3M310.5 322 v2M311.5 324 v3M312.5 327 v3M313.5 330 v2M314.5 332 v3M315.5 335 v2M316.5 337 v3M317.5 340 v2M318.5 342 v3M319.5 345 v2M320.5 347 v3M321.5 350 v2M322.5 352 v3M323.5 355 v2M324.5 357 v3M325.5 360 v3M326.5 363 v2M327.5 365 v3M328.5 368 v2M329.5 370 v3M330.5 373 v2M331.5 375 v3M332.5 378 v2M333.5 380 v3M334.5 383 v2M335.5 385 v3M336.5 388 v3M337.5 391 v2M338.5 393 v3M339.5 396 v2M340.5 398 v3M341.5 401 v2M342.5 403 v3M343.5 406 v2M344.5 408 v3M345.5 411 v2M346.5 413 v3M347.5 416 v3M348.5 419 v2M349.5 421 v3M350.5 424 v2M351.5 426 v3M352.5 429 v2M353.5 431 v2"/>
<path class="aspect" stroke="#0f0" d="M248 165.5 h1M252 168.5 h1M256 171.5 h1M260 174.5 h1M264 177.5 h1M268 180.5 h1M272 182.5 h1M276 185.5 h1M280 188.5 h1M284 191.5 h1M288 194.5 h1M292 197.5 h1M296 200.5 h1M300 203.5 h1M304 206.5 h1M308 209.5 h1M312 212.5 h1M316 214.5 h1M320 217.5 h1M324 220.5 h1M328 223.5 h1M332 226.5 h1M336 229.5 h1M340 232.5 h1M344 235.5 h1M348 238.5 h1M352 241.5 h1M356 243.5 h1M360 246.5 h1M364 249.5 h1M368 252.5 h1M372 255.5 h1M376 258.5 h1M380 261.5 h1M384 264.5 h1M388 267.5 h1M392 270.5 h1M396 273.5 h1M400 275.5 h1M404 278.5 h1M408 281.5 h1M412 284.5 h1M416 287.5 h1M420 290.5 h1M424 293.5 h1M428 296.5 h1M432 299.5 h1M436 302.5 h1M440 305.5 h1"/>
<path class="aspect" stroke="#f00" d="M307 156.5 h1M308 157.5 h1M309 158.5 h1M310 159.5 h1M311 160.5 h1M312.5 161 v2M313 163.5 h1M314 164.5 h1M315 165.5 h1M316 166.5 h1M317 167.5 h1M318 168.5 h1M319 169.5 h1M320 170.5 h1M321.5 171 v2M322 173.5 h1M323 174.5 h1M324 175.5 h1M325 176.5 h1M326 177.5 h1M327 178.5 h1M328 179.5 h1M329 180.5 h1M330.5 181 v2M331 183.5 h1M332 184.5 h1M333 185.5 h1M334 186.5 h1M335 187.5 h1M336 188.5 h1M337 189.5 h1M338 190.5 h1M339.5 191 v2M340 193.5 h1M341 194.5 h1M342 195.5 h1M343 196.5 h1M344 197.5 h1M345 198.5 h1M346 199.5 h1M347 200.5 h1M348.5 201 v2M349 203.5 h1M350 204.5 h1M351 205.5 h1M352 206.5 h1M353 207.5 h1M354 208.5 h1M355 209.5 h1M356 210.5 h1M357.5 211 v2M358 213.5 h1M359 214.5 h1M360 215.5 h1M361 216.5 h1M362 217.5 h1M363 218.5 h1M364 219.5 h1M365 220.5 h1M366.5 221 v2M367 223.5 h1M368 224.5 h1M369 225.5 h1M370 226.5 h1M371 227.5 h1M372 228.5 h1M373 229.5 h1M374 230.5 h1M375.5 231 v2M376 233.5 h1M377 234.5 h1M378 235.5 h1M379 236.5 h1M380 237.5 h1M381 238.5 h1M382 239.5 h1M383 240.5 h1M384.5 241 v2M385 243.5 h1M386 244.5 h1M387 245.5 h1M388 246.5 h1M389 247.5 h1M390 248.5 h1M391 249.5 h1M392 250.5 h1M393.5 251 v2M394 253.5 h1M395 254.5 h1M396 255.5 h1M397 256.5 h1M398 257.5 h1M399 258.5 h1M400 259.5 h1M401 260.5 h1M402.5 261 v2M403 263.5 h1M404 264.5 h1M405 265.5 h1M406 266.5 h1M407 267.5 h1M408 268.5 h1M409 269.5 h1M410 270.5 h1M411.5 271 v2M412 273.5 h1M413 274.5 h1M414 275.5 h1M415 276.5 h1M416 277.5 h1M417 278.5 h1M418 279.5 h1M419 280.5 h1M420.5 281 v2M421 283.5 h1M422 284.5 h1M423 285.5 h1M424 286.5 h1M425 287.5 h1M426 288.5 h1M427 289.5 h1M428 290.5 h1M429.5 291 v2M430 293.5 h1M431 294.5 h1M432 295.5 h1M433 296.5 h1M434 297.5 h1M435 298.5 h1M436 299.5 h1M437 300.5 h1M438.5 301 v2M439 303.5 h1M440 304.5 h1M441 305.5 h1M442 306.5 h1"/>
<path class="aspect" stroke="#00f" d="M174 231.5 h2M176 232.5 h2M178 233.5 h2M180 234.5 h2M182 235.5 h2M185 237.5 h2M187 238.5 h2M189 239.5 h2M191 240.5 h2M193 241.5 h2M196 243.5 h2M198 244.5 h2M200 245.5 h2M202 246.5 h2M204 247.5 h2M206 248.5 h2M209 250.5 h2M211 251.5 h2M213 252.5 h2M215 253.5 h2M217 254.5 h2M220 256.5 h2M222 257.5 h2M224 258.5 h2M226 259.5 h2M228 260.5 h2M231 262.5 h2M233 263.5 h2M235 264.5 h2M237 265.5 h2M239 266.5 h2M242 268.5 h2M244 269.5 h2M246 270.5 h2M248 271.5 h2M250 272.5 h2M252 273.5 h2M255 275.5 h2M257 276.5 h2M259 277.5 h2M261 278.5 h2M263 279.5 h2M266 281.5 h2M268 282.5 h2M270 283.5 h2M272 284.5 h2M274 285.5 h2M277 287.5 h2M279 288.5 h2M281 289.5 h2M283 290.5 h2M285 291.5 h2M288 293.5 h2M290 294.5 h2M292 295.5 h2M294 296.5 h2M296 297.5 h2M299 299.5 h2M301 300.5 h2M303 301.5 h2M305 302.5 h2M307 303.5 h2M309 304.5 h2M312 306.5 h2M314 307.5 h2M316 308.5 h2M318 309.5 h2M320 310.5 h2M323 312.5 h2M325 313.5 h2M327 314.5 h2M329 315.5 h2M331 316.5 h2M334 318.5 h2M336 319.5 h2M338 320.5 h2M340 321.5 h2M342 322.5 h2M345 324.5 h2M347 325.5 h2M349 326.5 h2M351 327.5 h2M353 328.5 h2M355 329.5 h2M358 331.5 h2M360 332.5 h2M362 333.5 h2M364 334.5 h2M366 335.5 h2M369 337.5 h2M371 338.5 h2M373 339.5 h2M375 340.5 h2M377 341.5 h2M380 343.5 h2M382 344.5 h2M384 345.5 h2M386 346.5 h2M388 347.5 h2M391 349.5 h2M393 350.5 h2M395 351.5 h2M397 352.5 h2M399 353.5 h2M401 354.5 h2M404 356.5 h2M406 357.5 h2M408 358.5 h2M410 359.5 h2M412 360.5 h2M415 362.5 h2M417 363.5 h2M419 364.5 h2M421 365.5 h2M423 366.5 h2M173 230.5 h1M184 236.5 h1M195 242.5 h1M208 249.5 h1M219 255.5 h1M230 261.5 h1M241 267.5 h1M254 274.5 h1M265 280.5 h1M276 286.5 h1M287 292.5 h1M298 298.5 h1M311 305.5 h1M322 311.5 h1M333 317.5 h1M344 323.5 h1M357 330.5 h1M368 336.5 h1M379 342.5 h1M390 348.5 h1M403 355.5 h1M414 361.5 h1M425 367.5 h1"/>
<path class="aspect" stroke="#ff0" d="M173 230.5 h1M175 227.5 h1M177 224.5 h1M179 221.5 h1M181 218.5 h1"/>
<path class="aspect" stroke="#0ff" d="M175 229.5 h1M178 227.5 h1M181 226.5 h1M184 224.5 h1M187 222.5 h1M190 221.5 h1M193 219.5 h1M196 217.5 h1M199 216.5 h1M202 214.5 h1M205 212.5 h1M208 211.5 h1M211 209.5 h1M214 207.5 h1M217 206.5 h1M220 204.5 h1M223 202.5 h1M226 201.5 h1M229 199.5 h1M232 197.5 h1M235 196.5 h1M238 194.5 h1M241 192.5 h1M244 191.5 h1M247 189.5 h1M250 187.5 h1M253 186.5 h1M256 184.5 h1M259 183.5 h1M262 181.5 h1M265 179.5 h1M268 178.5 h1M271 176.5 h1M274 174.5 h1M277 173.5 h1M280 171.5 h1M283 169.5 h1M286 168.5 h1M289 166.5 h1M292 164.5 h1M295 163.5 h1M298 161.5 h1M301 159.5 h1M304 158.5 h1M307 156.5 h1"/>
<path class="aspect" stroke="#00f" d="M181 218.5 h1M185 220.5 h1M189 223.5 h1M193 225.5 h1M197 228.5 h1M201 230.5 h1M205 233.5 h1M209 235.5 h1M213 238.5 h1M217 240.5 h1M221 242.5 h1M225 245.5 h1M229 247.5 h1M233 250.5 h1M237 252.5 h1M241 255.5 h1M245 257.5 h1M249 260.5 h1M253 262.5 h1M257 264.5 h1M261 267.5 h1M265 269.5 h1M269 272.5 h1M273 274.5 h1M277 277.5 h1M281 279.5 h1M285 282.5 h1M289 284.5 h1M293 286.5 h1M297 289.5 h1M301 291.5 h1M305 294.5 h1M309 296.5 h1M313 299.5 h1M317 301.5 h1M321 303.5 h1M325 306.5 h1M329 308.5 h1M333 311.5 h1M337 313.5 h1M341 316.5 h1M345 318.5 h1M349 321.5 h1M353 323.5 h1M357 325.5 h1M361 328.5 h1M365 330.5 h1M369 333.5 h1M373 335.5 h1M377 338.5 h1M381 340.5 h1M385 343.5 h1M389 345.5 h1M393 347.5 h1M397 350.5 h1M401 352.5 h1M405 355.5 h1M409 357.5 h1M413 360.5 h1M417 362.5 h1M421 365.5 h1M425 367.5 h1"/>
<path class="aspect" stroke="#0f0" d="M307 156.5 h1M309 159.5 h1M310 162.5 h1M312 165.5 h1M314 168.5 h1M315 171.5 h1M317 174.5 h1M319 177.5 h1M320 180.5 h1M322 183.5 h1M324 186.5 h1M325 189.5 h1M327 192.5 h1M329 195.5 h1M330 198.5 h1M332 201.5 h1M334 204.5 h1M336 207.5 h1M337 210.5 h1M339 213.5 h1M341 216.5 h1M342 219.5 h1M344 222.5 h1M346 225.5 h1M347 228.5 h1M349 231.5 h1M351 234.5 h1M352 237.5 h1M354 240.5 h1M356 243.5 h1M357 246.5 h1M359 249.5 h1M361 252.5 h1M362 255.5 h1M364 258.5 h1M366 261.5 h1M367 264.5 h1M369 267.5 h1M371 270.5 h1M372 273.5 h1M374 276.5 h1M376 279.5 h1M377 282.5 h1M379 285.5 h1M381 288.5 h1M382 291.5 h1M384 294.5 h1M386 297.5 h1M388 300.5 h1M389 303.5 h1M391 306.5 h1M393 309.5 h1M394 312.5 h1M396 315.5 h1M398 318.5 h1M399 321.5 h1M401 324.5 h1M403 327.5 h1M404 330.5 h1M406 333.5 h1M408 336.5 h1M409 339.5 h1M411 342.5 h1M413 345.5 h1M414 348.5 h1M416 351.5 h1M418 354.5 h1M419 357.5 h1M421 360.5 h1M423 363.5 h1M424 366.5 h1"/>
<path class="aspect" stroke="#0ff" d="M306 156.5 h2M304 157.5 h2M302 158.5 h2M300 159.5 h2M298 160.5 h2M296 161.5 h2M294 162.5 h2M292 163.5 h2M290 164.5 h2M288 165.5 h2M286 166.5 h2M284 167.5 h2M282 168.5 h2M280 169.5 h2M278 170.5 h2M276 171.5 h2M274 172.5 h2M272 173.5 h2M270 174.5 h2M268 175.5 h2M266 176.5 h2M264 177.5 h2M262 178.5 h2M260 179.5 h2M258 180.5 h2M256 181.5 h2M254 182.5 h2M252 183.5 h2M250 184.5 h2M248 185.5 h2M246 186.5 h2M243 187.5 h3M241 188.5 h2M239 189.5 h2M237 190.5 h2M235 191.5 h2M233 192.5 h2M231 193.5 h2M229 194.5 h2M227 195.5 h2M225 196.5 h2M223 197.5 h2M221 198.5 h2M219 199.5 h2M217 200.5 h2M215 201.5 h2M213 202.5 h2M211 203.5 h2M209 204.5 h2M207 205.5 h2M205 206.5 h2M203 207.5 h2M201 208.5 h2M199 209.5 h2M197 210.5 h2M195 211.5 h2M193 212.5 h2M191 213.5 h2M189 214.5 h2M187 215.5 h2M185 216.5 h2M183 217.5 h2M181 218.5 h2"/>
</g>
<g id="sidebar">
<g font-family="Liberation Mono, monospace" font-size="10" style="will-change:transform">
<text x="605.5" y="14" fill="#fff">Astrolog 5.40</text>
<text x="605.5" y="24" fill="#c0c0c0">&quot;twj&quot;</text>
<text x="605.5" y="34" fill="#c0c0c0">Fri March 6, 1970</text>
<text x="605.5" y="44" fill="#c0c0c0">10:27am (ST +8:00 GMT)</text>
<text x="605.5" y="54" fill="#c0c0c0">&quot;null&quot;</text>
<text x="605.5" y="64" fill="#c0c0c0">121°30E 25°03N</text>
<text x="605.5" y="74" fill="#c0c0c0">Placidus houses.</text>
<text x="605.5" y="84" fill="#c0c0c0">Tropical, Geocentric.</text>
<text x="605.5" y="94" fill="#c0c0c0">Julian Day = 2440651.6021</text>
<text x="611.5" y="114" fill="#f00">1st house:</text>
<text x="683.5" y="114" fill="#0f0">3Gem58</text>
<text x="611.5" y="124" fill="#ff0">2nd house:</text>
<text x="677.5" y="124" fill="#0f0">29Gem30</text>
<text x="611.5" y="134" fill="#0f0">3rd house:</text>
<text x="677.5" y="134" fill="#00f">23Can20</text>
<text x="611.5" y="144" fill="#00f">4th house:</text>
<text x="677.5" y="144" fill="#f00">19Leo14</text>
<text x="611.5" y="154" fill="#f00">5th house:</text>
<text x="677.5" y="154" fill="#ff0">20Vir16</text>
<text x="611.5" y="164" fill="#ff0">6th house:</text>
<text x="677.5" y="164" fill="#0f0">26Lib52</text>
<text x="611.5" y="174" fill="#0f0">7th house:</text>
<text x="683.5" y="174" fill="#f00">3Sag58</text>
<text x="611.5" y="184" fill="#00f">8th house:</text>
<text x="677.5" y="184" fill="#f00">29Sag30</text>
<text x="611.5" y="194" fill="#f00">9th house:</text>
<text x="677.5" y="194" fill="#ff0">23Cap20</text>
<text x="605.5" y="204" fill="#ff0">10th house:</text>
<text x="677.5" y="204" fill="#0f0">19Aqu14</text>
<text x="605.5" y="214" fill="#0f0">11th house:</text>
<text x="677.5" y="214" fill="#00f">20Pis16</text>
<text x="605.5" y="224" fill="#00f">12th house:</text>
<text x="677.5" y="224" fill="#f00">26Ari52</text>
<text x="611.5" y="244" fill="#f00">Sun:</text>
<text x="641.5" y="244" fill="#00f">15Pis06</text>
<text x="695.5" y="244" fill="#c0c0c0">- 0°00&#x27;</text>
<text x="605.5" y="254" fill="#00f">Moon:</text>
<text x="641.5" y="254" fill="#0f0">22Aqu18</text>
<text x="695.5" y="254" fill="#c0c0c0">- 1°45&#x27;</text>
<text x="605.5" y="264" fill="#0f0">Merc:</text>
<text x="647.5" y="264" fill="#00f">0Pis26</text>
<text x="695.5" y="264" fill="#c0c0c0">- 2°10&#x27;</text>
<text x="605.5" y="274" fill="#0f0">Venu:</text>
<text x="641.5" y="274" fill="#00f">24Pis52</text>
<text x="695.5" y="274" fill="#c0c0c0">- 1°21&#x27;</text>
<text x="605.5" y="284" fill="#f00">Mars:</text>
<text x="641.5" y="284" fill="#f00">29Ari19</text>
<text x="695.5" y="284" fill="#c0c0c0">+ 0°11&#x27;</text>
<text x="605.5" y="294" fill="#f00">Jupi:</text>
<text x="647.5" y="294" fill="#00f">5Sco39</text>
<text x="683.5" y="294" fill="#fff">R</text>
<text x="695.5" y="294" fill="#c0c0c0">+ 1°26&#x27;</text>
<text x="605.5" y="304" fill="#ff0">Satu:</text>
<text x="647.5" y="304" fill="#ff0">5Tau17</text>
<text x="695.5" y="304" fill="#c0c0c0">- 2°14&#x27;</text>
<text x="605.5" y="314" fill="#0f0">Uran:</text>
<text x="647.5" y="314" fill="#0f0">7Lib40</text>
<text x="683.5" y="314" fill="#fff">R</text>
<text x="695.5" y="314" fill="#c0c0c0">+ 0°45&#x27;</text>
<text x="605.5" y="324" fill="#00f">Nept:</text>
<text x="647.5" y="324" fill="#f00">0Sag53</text>
<text x="683.5" y="324" fill="#fff">R</text>
<text x="695.5" y="324" fill="#c0c0c0">+ 1°42&#x27;</text>
<text x="605.5" y="334" fill="#00f">Plut:</text>
<text x="641.5" y="334" fill="#ff0">26Vir22</text>
<text x="683.5" y="334" fill="#fff">R</text>
<text x="695.5" y="334" fill="#c0c0c0">+16°14&#x27;</text>
<text x="605.5" y="344" fill="#008080">Node:</text>
<text x="641.5" y="344" fill="#00f">11Pis53</text>
<text x="683.5" y="344" fill="#fff">R</text>
<text x="695.5" y="344" fill="#c0c0c0">+ 0°00&#x27;</text>
<text x="605.5" y="364" fill="#c0c0c0">Fire: 2, Earth: 2,</text>
<text x="605.5" y="374" fill="#c0c0c0">Air : 4, Water: 5</text>
<text x="605.5" y="384" fill="#c0c0c0">Car: 2, Fix: 4, Mut: 7</text>
<text x="605.5" y="394" fill="#c0c0c0">Yang: 6, Yin: 7</text>
<text x="605.5" y="404" fill="#c0c0c0">M: 7, N: 4, A: 7, D: 4</text>
<text x="605.5" y="414" fill="#c0c0c0">Ang: 4, Suc: 3, Cad: 4</text>
<text x="605.5" y="424" fill="#c0c0c0">Learn: 4, Share: 9</text>
</g>
<path class="mini" stroke="#f00" d="M746 107.5 h6M746 113.5 h6M745 106.5 h1M745 114.5 h1M747.5 108 v5M750.5 108 v5M752 106.5 h1M752 114.5 h1"/>
<path class="mini" stroke="#ff0" d="M746 117.5 h6M746 123.5 h6M745 116.5 h1M745 124.5 h1M747.5 118 v5M750.5 118 v5M752 116.5 h1M752 124.5 h1"/>
<path class="mini" stroke="#0f0" d="M747 127.5 h3M745 128.5 h2M750 128.5 h2M745 130.5 h2M750 131.5 h2M745 133.5 h2M750 133.5 h2M747 134.5 h3M744 129.5 h1M744.5 131 v2M747.5 131 v2M749.5 129 v2M752.5 129 v2M752 132.5 h1"/>
<path class="mini" stroke="#00f" d="M747 136.5 h3M744 142.5 h1M745.5 138 v3M745 143.5 h1M746 137.5 h1M746.5 141 v2M750 137.5 h1M750.5 141 v2M751.5 138 v3M751 143.5 h1M752 144.5 h1"/>
<path class="mini" stroke="#f00" d="M749 148.5 h3M744 146.5 h1M745.5 147 v7M746 146.5 h1M747.5 147 v7M748 146.5 h1M749 147.5 h1M749.5 149 v4M749 154.5 h1M750 153.5 h1M751 147.5 h1M751.5 149 v4M751 154.5 h1"/>
<path class="mini" stroke="#ff0" d="M747 158.5 h3M744 161.5 h4M749 161.5 h4M744 163.5 h9M746.5 159 v2M750.5 159 v2"/>
<path class="mini" stroke="#0f0" d="M750 166.5 h3M751 167.5 h2M744 174.5 h1M745 169.5 h1M745 173.5 h1M746 170.5 h1M746 172.5 h1M747 171.5 h1M748 170.5 h1M748 172.5 h1M749 169.5 h1M749 173.5 h1M750 168.5 h1M752 168.5 h1"/>
<path class="mini" stroke="#00f" d="M750 176.5 h3M751 177.5 h2M744 184.5 h1M745 179.5 h1M745 183.5 h1M746 180.5 h1M746 182.5 h1M747 181.5 h1M748 180.5 h1M748 182.5 h1M749 179.5 h1M749 183.5 h1M750 178.5 h1M752 178.5 h1"/>
<path class="mini" stroke="#f00" d="M750 186.5 h2M744 187.5 h2M748 187.5 h2M750 189.5 h2M745 186.5 h1M745.5 188 v3M746.5 191 v3M747.5 188 v3M748 186.5 h1M749 188.5 h1M751 190.5 h1M751 194.5 h1M752.5 187 v2M752.5 191 v3"/>
<path class="mini" stroke="#ff0" d="M745 197.5 h2M748 197.5 h2M747 198.5 h2M750 198.5 h2M745 202.5 h2M748 202.5 h2M747 203.5 h2M750 203.5 h2M744 199.5 h1M744 204.5 h1M745 198.5 h1M745 203.5 h1M746 196.5 h1M746 201.5 h1M747 199.5 h1M747 204.5 h1M749 196.5 h1M749 201.5 h1M750 199.5 h1M750 204.5 h1M751 197.5 h1M751 202.5 h1M752 196.5 h1M752 201.5 h1"/>
<path class="mini" stroke="#0f0" d="M744 210.5 h9M744 206.5 h1M744 214.5 h1M745 207.5 h1M745 213.5 h1M746.5 208 v2M746.5 211 v2M750.5 208 v2M750.5 211 v2M751 207.5 h1M751 213.5 h1M752 206.5 h1M752 214.5 h1"/>
<path class="mini" stroke="#00f" d="M745 216.5 h2M750 216.5 h2M744.5 217 v2M745 219.5 h1M747.5 217 v3M748.5 220 v5M749.5 217 v3M751 219.5 h1M752.5 217 v2"/>
<path class="mini" stroke="#f00" d="M747 236.5 h3M745 237.5 h2M750 237.5 h2M745 243.5 h2M750 243.5 h2M747 244.5 h3M744.5 239 v3M745 238.5 h1M745 242.5 h1M748 240.5 h1M751 238.5 h1M751 242.5 h1M752.5 239 v3"/>
<path class="mini" stroke="#00f" d="M746 246.5 h3M749 247.5 h2M749 253.5 h2M746 254.5 h3M745 247.5 h1M745 253.5 h1M746 248.5 h1M746 252.5 h1M747.5 249 v3M750 248.5 h1M750 252.5 h1M751.5 249 v3"/>
<path class="mini" stroke="#0f0" d="M747 257.5 h3M747 261.5 h3M746 263.5 h5M746 256.5 h1M746.5 258 v3M748 262.5 h1M748 264.5 h1M750 256.5 h1M750.5 258 v3"/>
<path class="mini" stroke="#0f0" d="M747 266.5 h3M747 270.5 h3M746 272.5 h5M746.5 267 v3M748 271.5 h1M748.5 273 v2M750.5 267 v3"/>
<path class="mini" stroke="#f00" d="M750 276.5 h3M751 277.5 h2M746 279.5 h2M746 284.5 h2M744.5 281 v2M745 280.5 h1M745 283.5 h1M748 280.5 h1M748 283.5 h1M749 279.5 h1M749.5 281 v2M750 278.5 h1M752 278.5 h1"/>
<path class="mini" stroke="#f00" d="M745 287.5 h2M745 293.5 h8M745 292.5 h1M746.5 290 v2M747.5 288 v2M750.5 287 v6M750 294.5 h1M751 286.5 h1"/>
<path class="mini" stroke="#ff0" d="M745 297.5 h5M749 299.5 h2M747 300.5 h2M747 296.5 h1M747.5 298 v2M747.5 301 v3M750.5 302 v2M751.5 300 v2M751 304.5 h1"/>
<path class="mini" stroke="#0f0" d="M746 309.5 h5M747 312.5 h3M745 306.5 h1M745 311.5 h1M746.5 307 v2M746 310.5 h1M747 313.5 h1M748 308.5 h1M748.5 310 v2M748 314.5 h1M749 313.5 h1M750.5 307 v2M750 310.5 h1M751 306.5 h1M751 311.5 h1"/>
<path class="mini" stroke="#00f" d="M744 317.5 h2M747 317.5 h3M751 317.5 h2M747 320.5 h3M746 322.5 h5M745 316.5 h1M745 318.5 h1M746 319.5 h1M748 316.5 h1M748.5 318 v2M748 321.5 h1M748.5 323 v2M750 319.5 h1M751 316.5 h1M751 318.5 h1"/>
<path class="mini" stroke="#00f" d="M747 330.5 h3M746 332.5 h5M745.5 326 v3M746 329.5 h1M747 327.5 h1M748 326.5 h1M748 328.5 h1M748 331.5 h1M748.5 333 v2M749 327.5 h1M750 329.5 h1M751.5 326 v3"/>
<path class="mini" stroke="#008080" d="M747 336.5 h3M745 342.5 h2M750 342.5 h2M744 343.5 h1M745.5 338 v3M745 344.5 h1M746 337.5 h1M746 341.5 h1M746 343.5 h1M750 337.5 h1M750 341.5 h1M750 343.5 h1M751.5 338 v3M751 344.5 h1M752 343.5 h1"/>
</g>
</svg>

</body></html>
